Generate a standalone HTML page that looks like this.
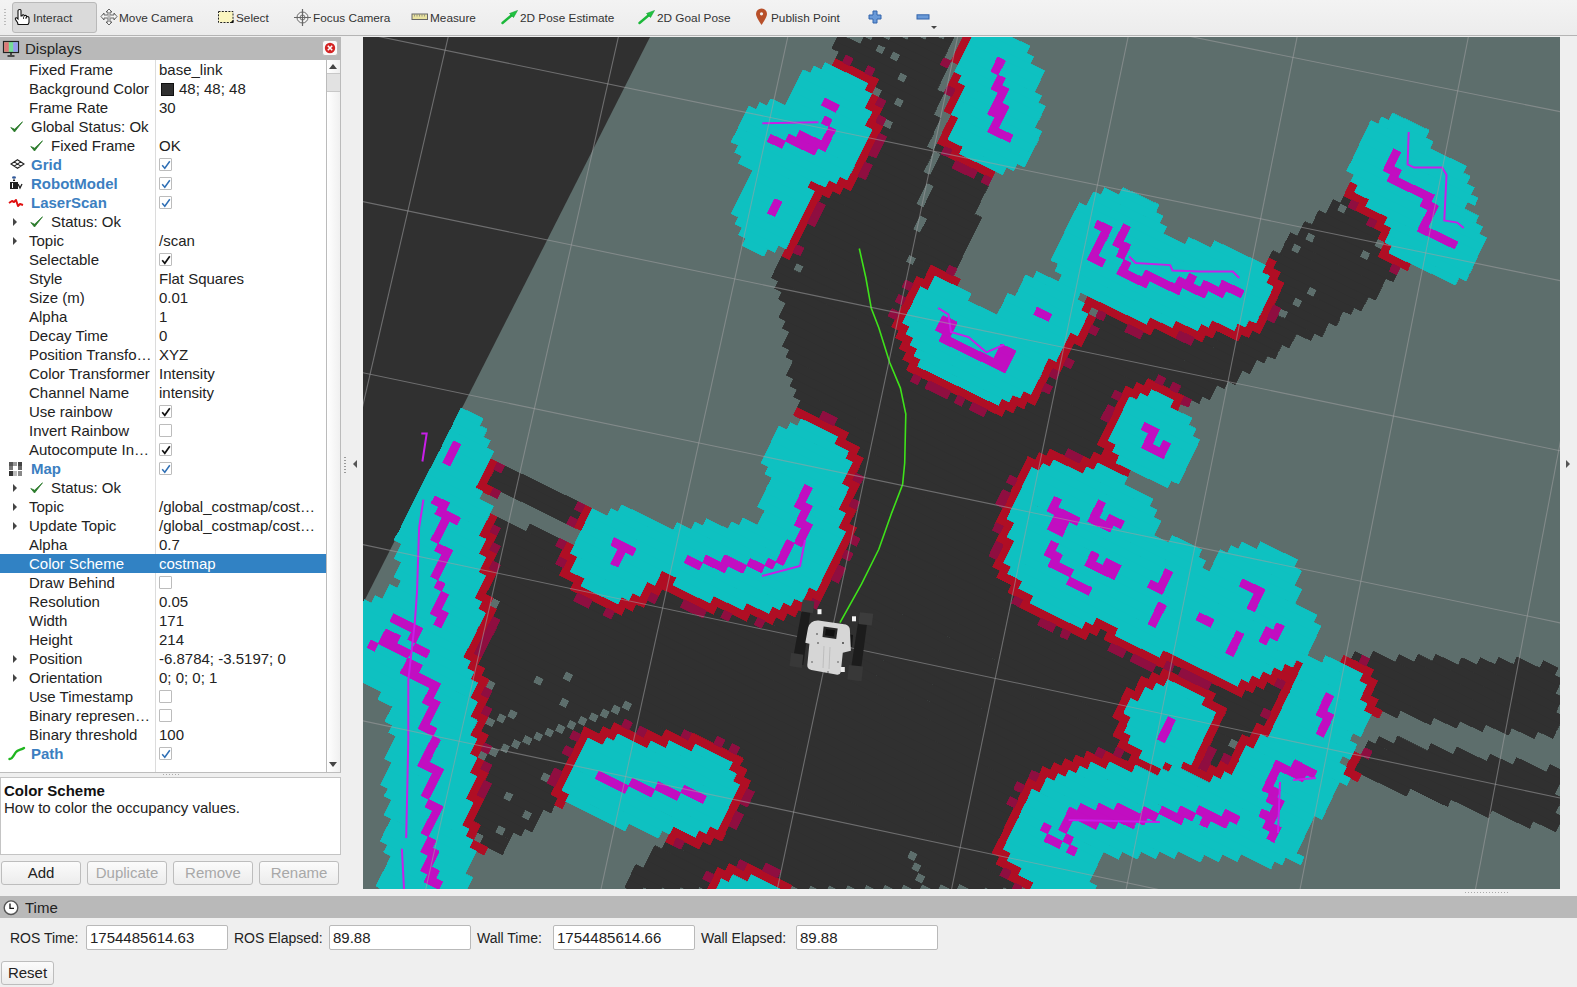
<!DOCTYPE html>
<html><head><meta charset="utf-8">
<style>
*{box-sizing:border-box}
html,body{margin:0;padding:0;width:1577px;height:987px;overflow:hidden;background:#efefef;font-family:"Liberation Sans",sans-serif;color:#222}
.a{position:absolute;white-space:nowrap}
#tb{position:absolute;left:0;top:0;width:1577px;height:36px;background:linear-gradient(#f3f3f3,#ececec);border-bottom:1px solid #b4b4b4}
.tt{position:absolute;top:10px;font-size:11.8px;color:#333;white-space:nowrap;line-height:16px}
#tree{position:absolute;left:0;top:60px;width:341px;height:713px;background:#fff;border-bottom:1px solid #bdbdbd;overflow:hidden}
.r{position:absolute;left:0;width:326px;height:19px;font-size:15px;line-height:19px}
.l{position:absolute;left:29px;top:0}
.v{position:absolute;left:159px;top:0}
.b{font-weight:bold;color:#3c7fc1}
.cb{position:absolute;left:159px;top:3px;width:13px;height:13px;border:1px solid #bcbcbc;background:#fff;border-radius:1px}
.ar{position:absolute;left:13px;top:6px;width:0;height:0;border-left:4px solid #444;border-top:4px solid transparent;border-bottom:4px solid transparent}
.btn{position:absolute;height:24px;border:1px solid #bdbdbd;border-radius:3px;background:linear-gradient(#fbfbfb,#ececec);font-size:15px;text-align:center;line-height:22px}
.fld{position:absolute;top:925px;height:25px;border:1px solid #b9b9b9;border-radius:2px;background:#fff;font-size:15px;line-height:23px;padding-left:3px}
.tl{position:absolute;top:929px;font-size:14px;line-height:19px}
</style></head><body>
<!-- toolbar -->
<div id="tb">
 <div class="a" style="left:4px;top:9px;width:2px;height:18px;background:repeating-linear-gradient(#bbb 0 1px,transparent 1px 3px)"></div>
 <div class="a" style="left:12px;top:2px;width:85px;height:31px;border:1px solid #b9b9b9;border-radius:3px;background:#dadada"></div>
 <!--icons-->
<svg class="a" style="left:14px;top:8px" width="18" height="18" viewBox="0 0 18 18"><path d="M5.5 1.5 Q6.8 1.2 7 2.5 L7 8 L8 8 Q8.3 6.5 9.5 6.8 Q10.3 7 10.3 8.3 Q10.8 7 12 7.5 Q12.8 8 12.6 9 Q13.5 8.2 14.4 8.8 Q15.2 9.3 15 11 L15 14.5 L14 16.5 L4 16.5 L3.5 14.5 L1.5 11.5 Q1 9.5 2.5 9.7 L4 11 L4 2.6 Q4.2 1.5 5.5 1.5 Z" fill="#fff" stroke="#111" stroke-width="1.1"/><path d="M9.5 8.5 V11 M12 9 V11" stroke="#111" stroke-width="0.8"/></svg>
<svg class="a" style="left:100px;top:8px" width="18" height="18" viewBox="0 0 18 18"><path d="M9 1 L12 4 L10 4 L10 7 L14 7 L14 5 L17 8.5 L14 12 L14 10 L10 10 L10 14 L12 14 L9 17 L6 14 L8 14 L8 10 L4 10 L4 12 L1 8.5 L4 5 L4 7 L8 7 L8 4 L6 4 Z" fill="#f4f4f4" stroke="#555" stroke-width="0.9"/><rect x="7.5" y="6.5" width="3" height="4" fill="#bbb"/></svg>
<svg class="a" style="left:217px;top:10px" width="18" height="14" viewBox="0 0 18 14"><rect x="1.5" y="1.5" width="14.5" height="11" fill="#fbf6c0" stroke="#222" stroke-width="1" stroke-dasharray="2 1.3"/><path d="M13 13 L16.5 13 L16.5 9.5 Z" fill="#111"/></svg>
<svg class="a" style="left:293px;top:8px" width="19" height="19" viewBox="0 0 19 19"><circle cx="9.5" cy="9.5" r="5.5" fill="#f2f2f2" stroke="#666" stroke-width="1"/><circle cx="9.5" cy="9.5" r="2.5" fill="none" stroke="#666" stroke-width="0.9"/><path d="M9.5 1 V18 M1 9.5 H18" stroke="#666" stroke-width="1.2"/></svg>
<svg class="a" style="left:411px;top:13px" width="18" height="8" viewBox="0 0 18 8"><rect x="1" y="1" width="15.5" height="5.5" fill="#e9e3a0" stroke="#666" stroke-width="1"/><path d="M3.5 1.5 V3.5 M6 1.5 V3.5 M8.5 1.5 V3.5 M11 1.5 V3.5 M13.5 1.5 V3.5" stroke="#777" stroke-width="0.7"/></svg>
<svg class="a" style="left:501px;top:9px" width="18" height="16" viewBox="0 0 18 16"><path d="M1.5 14 L11 6" stroke="#1cb83a" stroke-width="2.4" stroke-linecap="round"/><path d="M16.5 1.5 L8.5 4.5 L12.5 8.5 Z" fill="#1fc43f" stroke="#18a034" stroke-width="0.6"/></svg>
<svg class="a" style="left:638px;top:9px" width="18" height="16" viewBox="0 0 18 16"><path d="M1.5 14 L11 6" stroke="#1cb83a" stroke-width="2.4" stroke-linecap="round"/><path d="M16.5 1.5 L8.5 4.5 L12.5 8.5 Z" fill="#1fc43f" stroke="#18a034" stroke-width="0.6"/></svg>
<svg class="a" style="left:755px;top:8px" width="13" height="18" viewBox="0 0 13 18"><path d="M6.5 17 Q1 9 1 6 A5.5 5.5 0 0 1 12 6 Q12 9 6.5 17 Z" fill="#b8502a"/><circle cx="6.5" cy="5.8" r="1.6" fill="#f1f1f1"/></svg>
<svg class="a" style="left:868px;top:10px" width="14" height="14" viewBox="0 0 14 14"><path d="M5 1 H9 V5 H13 V9 H9 V13 H5 V9 H1 V5 H5 Z" fill="#6a9ad8" stroke="#3264ac" stroke-width="1"/></svg>
<svg class="a" style="left:916px;top:14px" width="14" height="6" viewBox="0 0 14 6"><rect x="1" y="0.8" width="12" height="4.2" fill="#6a9ad8" stroke="#3264ac" stroke-width="1"/></svg>
<div class="a" style="left:931px;top:26px;width:0;height:0;border-top:3px solid #444;border-left:3px solid transparent;border-right:3px solid transparent"></div>
<!--/icons-->
 <div class="tt" style="left:33px">Interact</div>
 <div class="tt" style="left:119px">Move Camera</div>
 <div class="tt" style="left:236px">Select</div>
 <div class="tt" style="left:313px">Focus Camera</div>
 <div class="tt" style="left:430px">Measure</div>
 <div class="tt" style="left:520px">2D Pose Estimate</div>
 <div class="tt" style="left:657px">2D Goal Pose</div>
 <div class="tt" style="left:771px">Publish Point</div>
</div>
<!-- displays header -->
<div class="a" style="left:0;top:37px;width:341px;height:23px;background:#b9b9b9"></div>
<div class="a" style="left:25px;top:39px;font-size:15px;line-height:19px">Displays</div>
<div id="tree"><div class="a" style="left:155px;top:0;width:1px;height:713px;background:#dcdcdc"></div><div class="r" style="top:0px;"><span class="l" style="left:29px;">Fixed Frame</span><span class="v" style="">base_link</span></div><div class="r" style="top:19px;"><span class="l" style="left:29px;">Background Color</span><div class="a" style="left:161px;top:4px;width:13px;height:13px;background:#303030;border:1px solid #111"></div><span class="v" style="left:179px">48; 48; 48</span></div><div class="r" style="top:38px;"><span class="l" style="left:29px;">Frame Rate</span><span class="v" style="">30</span></div><div class="r" style="top:57px;"><svg class="a" style="left:10px;top:4px" width="13" height="12" viewBox="0 0 13 12"><path d="M0.8 6.5 L4.5 11 L12.5 0.8 L4.6 8.2 Z" fill="#2a7a2a" stroke="#2a7a2a" stroke-width="0.8" stroke-linejoin="round"/></svg><span class="l" style="left:31px;">Global Status: Ok</span></div><div class="r" style="top:76px;"><svg class="a" style="left:30px;top:4px" width="13" height="12" viewBox="0 0 13 12"><path d="M0.8 6.5 L4.5 11 L12.5 0.8 L4.6 8.2 Z" fill="#2a7a2a" stroke="#2a7a2a" stroke-width="0.8" stroke-linejoin="round"/></svg><span class="l" style="left:51px;">Fixed Frame</span><span class="v" style="">OK</span></div><div class="r" style="top:95px;"><svg class="a" style="left:10px;top:4px" width="15" height="10" viewBox="0 0 15 10"><path d="M7.5 0.7 L14 5 L7.5 9.3 L1 5 Z M4.2 2.9 L10.8 7.1 M10.8 2.9 L4.2 7.1" fill="none" stroke="#222" stroke-width="1.1"/></svg><span class="l b" style="left:31px;">Grid</span><div class="cb"></div><svg class="a" style="left:161px;top:5px" width="10" height="10" viewBox="0 0 10 10"><path d="M1.2 5.2 L3.8 8.3 L8.8 1.2" fill="none" stroke="#2f6fb5" stroke-width="1.5"/></svg></div><div class="r" style="top:114px;"><svg class="a" style="left:9px;top:1px" width="16" height="18" viewBox="0 0 16 18"><ellipse cx="5" cy="2.5" rx="2" ry="1.3" fill="#335a9a"/><rect x="4" y="4.5" width="2" height="1.5" fill="#222"/><rect x="1" y="7" width="8" height="7" fill="#222"/><rect x="3" y="8" width="1" height="5" fill="#fff"/><path d="M9 9 L11 13 L13 9" fill="none" stroke="#222" stroke-width="1.3"/></svg><span class="l b" style="left:31px;">RobotModel</span><div class="cb"></div><svg class="a" style="left:161px;top:5px" width="10" height="10" viewBox="0 0 10 10"><path d="M1.2 5.2 L3.8 8.3 L8.8 1.2" fill="none" stroke="#2f6fb5" stroke-width="1.5"/></svg></div><div class="r" style="top:133px;"><svg class="a" style="left:8px;top:5px" width="18" height="10" viewBox="0 0 18 10"><path d="M1 5 L4 3 L6 4 L8 2 L10 8 L12 6 L15 7" fill="none" stroke="#e01010" stroke-width="2" stroke-linejoin="round"/></svg><span class="l b" style="left:31px;">LaserScan</span><div class="cb"></div><svg class="a" style="left:161px;top:5px" width="10" height="10" viewBox="0 0 10 10"><path d="M1.2 5.2 L3.8 8.3 L8.8 1.2" fill="none" stroke="#2f6fb5" stroke-width="1.5"/></svg></div><div class="r" style="top:152px;"><div class="ar"></div><svg class="a" style="left:30px;top:4px" width="13" height="12" viewBox="0 0 13 12"><path d="M0.8 6.5 L4.5 11 L12.5 0.8 L4.6 8.2 Z" fill="#2a7a2a" stroke="#2a7a2a" stroke-width="0.8" stroke-linejoin="round"/></svg><span class="l" style="left:51px;">Status: Ok</span></div><div class="r" style="top:171px;"><div class="ar"></div><span class="l" style="left:29px;">Topic</span><span class="v" style="">/scan</span></div><div class="r" style="top:190px;"><span class="l" style="left:29px;">Selectable</span><div class="cb"></div><svg class="a" style="left:161px;top:5px" width="10" height="10" viewBox="0 0 10 10"><path d="M1.2 5.2 L3.8 8.3 L8.8 1.2" fill="none" stroke="#111" stroke-width="1.7"/></svg></div><div class="r" style="top:209px;"><span class="l" style="left:29px;">Style</span><span class="v" style="">Flat Squares</span></div><div class="r" style="top:228px;"><span class="l" style="left:29px;">Size (m)</span><span class="v" style="">0.01</span></div><div class="r" style="top:247px;"><span class="l" style="left:29px;">Alpha</span><span class="v" style="">1</span></div><div class="r" style="top:266px;"><span class="l" style="left:29px;">Decay Time</span><span class="v" style="">0</span></div><div class="r" style="top:285px;"><span class="l" style="left:29px;">Position Transfo…</span><span class="v" style="">XYZ</span></div><div class="r" style="top:304px;"><span class="l" style="left:29px;">Color Transformer</span><span class="v" style="">Intensity</span></div><div class="r" style="top:323px;"><span class="l" style="left:29px;">Channel Name</span><span class="v" style="">intensity</span></div><div class="r" style="top:342px;"><span class="l" style="left:29px;">Use rainbow</span><div class="cb"></div><svg class="a" style="left:161px;top:5px" width="10" height="10" viewBox="0 0 10 10"><path d="M1.2 5.2 L3.8 8.3 L8.8 1.2" fill="none" stroke="#111" stroke-width="1.7"/></svg></div><div class="r" style="top:361px;"><span class="l" style="left:29px;">Invert Rainbow</span><div class="cb"></div></div><div class="r" style="top:380px;"><span class="l" style="left:29px;">Autocompute In…</span><div class="cb"></div><svg class="a" style="left:161px;top:5px" width="10" height="10" viewBox="0 0 10 10"><path d="M1.2 5.2 L3.8 8.3 L8.8 1.2" fill="none" stroke="#111" stroke-width="1.7"/></svg></div><div class="r" style="top:399px;"><svg class="a" style="left:8px;top:2px" width="16" height="16" viewBox="0 0 16 16"><rect x="1" y="1" width="4" height="4" fill="#555"/><rect x="5" y="1" width="4" height="4" fill="#999"/><rect x="10" y="1" width="4" height="4" fill="#444"/><rect x="1" y="5" width="4" height="4" fill="#777"/><rect x="10" y="5" width="4" height="4" fill="#666"/><rect x="1" y="10" width="4" height="5" fill="#333"/><rect x="5" y="10" width="4" height="5" fill="#bbb"/><rect x="10" y="10" width="4" height="5" fill="#888"/></svg><span class="l b" style="left:31px;">Map</span><div class="cb"></div><svg class="a" style="left:161px;top:5px" width="10" height="10" viewBox="0 0 10 10"><path d="M1.2 5.2 L3.8 8.3 L8.8 1.2" fill="none" stroke="#2f6fb5" stroke-width="1.5"/></svg></div><div class="r" style="top:418px;"><div class="ar"></div><svg class="a" style="left:30px;top:4px" width="13" height="12" viewBox="0 0 13 12"><path d="M0.8 6.5 L4.5 11 L12.5 0.8 L4.6 8.2 Z" fill="#2a7a2a" stroke="#2a7a2a" stroke-width="0.8" stroke-linejoin="round"/></svg><span class="l" style="left:51px;">Status: Ok</span></div><div class="r" style="top:437px;"><div class="ar"></div><span class="l" style="left:29px;">Topic</span><span class="v" style="">/global_costmap/cost…</span></div><div class="r" style="top:456px;"><div class="ar"></div><span class="l" style="left:29px;">Update Topic</span><span class="v" style="">/global_costmap/cost…</span></div><div class="r" style="top:475px;"><span class="l" style="left:29px;">Alpha</span><span class="v" style="">0.7</span></div><div class="r" style="top:494px;background:#3182c4;width:326px;"><span class="l" style="left:29px;color:#fff;">Color Scheme</span><span class="v" style="color:#fff;">costmap</span></div><div class="r" style="top:513px;"><span class="l" style="left:29px;">Draw Behind</span><div class="cb"></div></div><div class="r" style="top:532px;"><span class="l" style="left:29px;">Resolution</span><span class="v" style="">0.05</span></div><div class="r" style="top:551px;"><span class="l" style="left:29px;">Width</span><span class="v" style="">171</span></div><div class="r" style="top:570px;"><span class="l" style="left:29px;">Height</span><span class="v" style="">214</span></div><div class="r" style="top:589px;"><div class="ar"></div><span class="l" style="left:29px;">Position</span><span class="v" style="">-6.8784; -3.5197; 0</span></div><div class="r" style="top:608px;"><div class="ar"></div><span class="l" style="left:29px;">Orientation</span><span class="v" style="">0; 0; 0; 1</span></div><div class="r" style="top:627px;"><span class="l" style="left:29px;">Use Timestamp</span><div class="cb"></div></div><div class="r" style="top:646px;"><span class="l" style="left:29px;">Binary represen…</span><div class="cb"></div></div><div class="r" style="top:665px;"><span class="l" style="left:29px;">Binary threshold</span><span class="v" style="">100</span></div><div class="r" style="top:684px;"><svg class="a" style="left:8px;top:2px" width="18" height="15" viewBox="0 0 18 15"><path d="M1.5 13 C5 13 6 8 8 6 C10 3.5 13 4 16 2" fill="none" stroke="#1fb51f" stroke-width="2.4" stroke-linecap="round"/></svg><span class="l b" style="left:31px;">Path</span><div class="cb"></div><svg class="a" style="left:161px;top:5px" width="10" height="10" viewBox="0 0 10 10"><path d="M1.2 5.2 L3.8 8.3 L8.8 1.2" fill="none" stroke="#2f6fb5" stroke-width="1.5"/></svg></div><div class="a" style="left:326px;top:0;width:15px;height:713px;background:linear-gradient(90deg,#fff,#f0f0f0);border-left:1px solid #bbb;border-right:1px solid #bbb"></div><div class="a" style="left:329px;top:4px;width:0;height:0;border-bottom:5px solid #444;border-left:4.5px solid transparent;border-right:4.5px solid transparent"></div><div class="a" style="left:327px;top:13px;width:13px;height:19px;background:#e2e2e2;border-top:1px solid #c8c8c8;border-bottom:1px solid #c8c8c8"></div><div class="a" style="left:329px;top:702px;width:0;height:0;border-top:5px solid #444;border-left:4.5px solid transparent;border-right:4.5px solid transparent"></div></div><!--/tree-->
<!-- description -->
<div class="a" style="left:0;top:777px;width:341px;height:78px;background:#fff;border:1px solid #c4c4c4"></div>
<div class="a" style="left:4px;top:781px;font-size:15px;font-weight:bold;line-height:19px;color:#111">Color Scheme</div>
<div class="a" style="left:4px;top:798px;font-size:15px;line-height:19px">How to color the occupancy values.</div>
<div class="btn" style="left:1px;top:861px;width:80px">Add</div>
<div class="btn" style="left:87px;top:861px;width:80px;color:#a8a8a8">Duplicate</div>
<div class="btn" style="left:173px;top:861px;width:80px;color:#a8a8a8">Remove</div>
<div class="btn" style="left:259px;top:861px;width:80px;color:#a8a8a8">Rename</div>
<!-- time -->
<div class="a" style="left:0;top:896px;width:1577px;height:22px;background:#b9b9b9"></div>
<div class="a" style="left:25px;top:898px;font-size:15px;line-height:19px">Time</div>
<div class="tl" style="left:10px">ROS Time:</div>
<div class="fld" style="left:86px;width:142px">1754485614.63</div>
<div class="tl" style="left:234px">ROS Elapsed:</div>
<div class="fld" style="left:329px;width:142px">89.88</div>
<div class="tl" style="left:477px">Wall Time:</div>
<div class="fld" style="left:553px;width:142px">1754485614.66</div>
<div class="tl" style="left:701px">Wall Elapsed:</div>
<div class="fld" style="left:796px;width:142px">89.88</div>
<div class="btn" style="left:1px;top:961px;width:53px;height:24px">Reset</div>
<!--chrome2-->
<svg class="a" style="left:2px;top:40px" width="18" height="18" viewBox="0 0 18 18"><rect x="1.5" y="1.5" width="15" height="11" fill="#7d9" stroke="#222" stroke-width="1.2"/><rect x="2.2" y="2.2" width="4.6" height="9.6" fill="#d77"/><rect x="11.2" y="2.2" width="4.6" height="9.6" fill="#99e"/><path d="M9 12.5 V15 M5.5 16 H12.5" stroke="#222" stroke-width="1.5"/></svg>
<div class="a" style="left:322px;top:40px;width:16px;height:16px;border:1px solid #bbb;border-radius:3px;background:#fafafa"></div>
<svg class="a" style="left:324px;top:42px" width="12" height="12" viewBox="0 0 12 12"><circle cx="6" cy="6" r="5.2" fill="#d42424"/><path d="M3.8 3.8 L8.2 8.2 M8.2 3.8 L3.8 8.2" stroke="#fff" stroke-width="1.6"/></svg>
<svg class="a" style="left:2px;top:899px" width="18" height="18" viewBox="0 0 18 18"><circle cx="9" cy="8.7" r="6.8" fill="#fff" stroke="#555" stroke-width="1.4"/><path d="M8 4.5 V9.3 H12" fill="none" stroke="#111" stroke-width="1.3"/></svg>
<div class="a" style="left:344px;top:457px;width:2px;height:17px;background:repeating-linear-gradient(#999 0 1px,transparent 1px 3px)"></div>
<div class="a" style="left:353px;top:460px;width:0;height:0;border-right:4px solid #555;border-top:4px solid transparent;border-bottom:4px solid transparent"></div>
<div class="a" style="left:1566px;top:460px;width:0;height:0;border-left:4px solid #555;border-top:4px solid transparent;border-bottom:4px solid transparent"></div>
<div class="a" style="left:163px;top:774px;width:18px;height:1px;background:repeating-linear-gradient(90deg,#aaa 0 1px,transparent 1px 3px)"></div>
<div class="a" style="left:1465px;top:892px;width:45px;height:1px;background:repeating-linear-gradient(90deg,#aaa 0 1px,transparent 1px 3px)"></div>
<!--/chrome2-->
<!-- viewport -->
<svg id="vp" class="a" style="left:363px;top:37px" width="1197" height="853" viewBox="363 37 1197 853"><defs><clipPath id="vpc"><rect x="363" y="37" width="1197" height="852"/></clipPath><clipPath id="dk"><polygon points="831.0,37.0 975.0,37.0 990.0,90.0 1000.0,165.0 993.9,177.6 991.4,180.1 976.2,215.6 981.3,218.1 956.0,271.3 958.5,286.5 975.0,330.0 1060.0,330.0 1072.0,298.0 1150.0,300.0 1250.0,290.0 1266.0,264.0 1270.6,254.4 1280.9,252.7 1287.8,237.2 1301.6,233.7 1303.3,225.1 1312.0,226.9 1318.8,214.8 1329.2,214.8 1334.4,204.5 1346.4,201.0 1349.9,185.5 1370.0,190.0 1410.0,255.0 1409.8,269.4 1400.0,271.7 1394.7,282.0 1384.3,282.0 1379.2,294.1 1365.4,297.5 1360.2,307.8 1349.9,307.8 1343.0,319.9 1330.9,321.6 1322.3,335.4 1310.2,335.4 1295.4,338.5 1280.3,351.4 1263.0,360.0 1250.1,366.6 1235.0,379.5 1226.3,383.8 1213.4,392.5 1200.4,398.9 1190.0,402.0 1150.0,420.0 1130.0,470.0 1070.0,520.0 1060.0,590.0 1100.0,612.0 1160.0,645.0 1240.0,680.0 1300.0,660.0 1330.0,700.0 1300.0,800.0 1250.0,800.0 1150.0,820.0 1085.0,845.0 1096.8,855.1 1092.5,889.0 622.0,889.0 630.6,865.9 643.6,865.9 663.0,840.0 685.0,825.0 600.0,790.0 574.5,805.5 550.8,807.7 531.4,827.1 514.1,833.6 501.1,853.0 488.2,846.5 479.6,857.3 455.0,850.0 455.0,540.0 486.0,510.5 527.0,529.9 529.2,525.6 573.4,542.9 600.0,560.0 700.0,560.0 800.0,520.0 815.0,432.0 801.1,418.4 794.7,414.0 801.1,403.2 790.3,386.0 792.5,362.2 783.9,347.1 790.3,334.2 780.6,316.9 781.7,293.2 773.1,278.0 775.2,263.0 790.0,240.0 800.0,150.0 830.0,75.0 835.7,56.4"/><polygon points="488.0,455.0 501.1,463.0 585.3,505.1 600.0,515.0 578.8,529.9 511.9,497.5 507.6,495.4 480.6,493.2 470.0,480.0"/><polygon points="1345.0,655.0 1373.0,656.5 1559.7,663.8 1559.7,734.3 1543.2,736.7 1518.9,734.3 1494.6,727.0 1467.8,727.0 1436.2,722.1 1414.3,717.3 1373.0,712.4 1350.0,712.0"/><polygon points="1345.0,760.0 1377.8,736.7 1411.9,744.0 1438.6,747.7 1472.7,753.8 1501.8,759.8 1531.0,763.5 1559.7,772.0 1559.7,828.0 1555.3,830.4 1514.0,819.4 1472.7,808.5 1432.5,798.7 1391.2,787.8 1353.5,775.6 1340.0,775.0"/></clipPath></defs><g clip-path="url(#vpc)"><rect x="363" y="37" width="1197" height="853" fill="#303030"/><polygon points="650.0,37.0 1560.0,37.0 1560.0,889.0 363.0,889.0 363.0,603.5" fill="#5d6e6c"/><path d="M1343.8 196.0L1351.2 199.5L1347.7 206.7L1340.4 203.2ZM1333.0 199.7L1340.4 203.2L1336.9 210.4L1329.6 206.9ZM1347.7 206.7L1369.7 217.3L1366.3 224.5L1344.3 214.0ZM1329.6 206.9L1381.0 231.5L1377.5 238.8L1326.1 214.2ZM947.0 32.8L954.2 36.2L950.7 43.4L943.5 39.9ZM1318.8 210.6L1377.5 238.8L1374.1 246.0L1315.3 217.9ZM929.0 33.0L950.7 43.4L947.2 50.5L925.4 40.1ZM1315.3 217.9L1381.4 249.5L1378.0 256.7L1311.9 225.1ZM911.0 33.2L947.2 50.5L943.6 57.6L907.4 40.3ZM1304.5 221.6L1363.3 249.7L1359.8 256.9L1301.1 228.8ZM1370.6 253.2L1392.7 263.8L1389.3 271.0L1367.2 260.5ZM892.9 33.3L943.6 57.6L940.1 64.8L889.4 40.5ZM1301.1 228.8L1308.4 232.3L1304.9 239.5L1297.6 236.0ZM1315.7 235.8L1396.6 274.6L1393.2 281.8L1312.3 243.1ZM874.9 33.5L947.3 68.2L943.8 75.4L871.4 40.7ZM1290.2 232.5L1385.8 278.3L1382.4 285.5L1286.8 239.7ZM864.1 37.2L878.6 44.1L875.0 51.3L860.6 44.3ZM885.8 47.6L893.1 51.1L889.5 58.2L882.3 54.7ZM900.3 54.5L943.8 75.4L940.3 82.5L896.8 61.7ZM1286.8 239.7L1294.1 243.3L1290.6 250.5L1283.3 247.0ZM1301.5 246.8L1382.4 285.5L1378.9 292.8L1298.0 254.0ZM838.9 33.9L940.3 82.5L936.7 89.7L835.3 41.1ZM1283.3 247.0L1378.9 292.8L1375.4 300.1L1279.8 254.2ZM835.3 41.1L900.5 72.3L896.9 79.4L831.7 48.2ZM907.7 75.8L944.0 93.2L940.4 100.3L904.2 82.9ZM1272.5 250.7L1368.1 296.5L1364.6 303.8L1269.0 257.9ZM839.0 51.7L846.2 55.1L842.6 62.3L835.4 58.8ZM853.4 58.6L867.9 65.5L864.4 72.7L849.9 65.7ZM875.2 69.0L940.4 100.3L936.9 107.5L871.6 76.2ZM1276.3 261.4L1364.6 303.8L1361.2 311.1L1272.9 268.7ZM878.9 79.6L936.9 107.5L933.3 114.7L875.3 86.8ZM1280.2 272.2L1309.6 286.3L1306.1 293.6L1276.7 279.5ZM1317.0 289.9L1353.8 307.5L1350.3 314.8L1313.5 297.1ZM882.5 90.3L897.1 97.2L893.5 104.4L879.0 97.4ZM904.3 100.7L940.6 118.1L937.1 125.3L900.8 107.9ZM1284.1 283.0L1343.0 311.3L1339.5 318.5L1280.6 290.3ZM886.2 100.9L937.1 125.3L933.5 132.5L882.7 108.1ZM1280.6 290.3L1295.3 297.3L1291.8 304.6L1277.1 297.5ZM1302.7 300.8L1339.5 318.5L1336.0 325.8L1299.2 308.1ZM882.7 108.1L933.5 132.5L930.0 139.7L879.1 115.2ZM1277.1 297.5L1328.7 322.3L1325.2 329.5L1273.6 304.8ZM893.6 122.2L930.0 139.7L926.4 146.8L890.1 129.4ZM937.2 143.2L944.5 146.6L941.0 153.8L933.7 150.3ZM1288.4 311.8L1325.2 329.5L1321.7 336.8L1284.9 319.1ZM882.8 125.9L933.7 150.3L930.1 157.5L879.3 133.1ZM941.0 153.8L955.5 160.8L952.0 168.0L937.4 161.0ZM977.3 171.3L984.6 174.8L981.1 182.0L973.8 178.5ZM1277.5 315.6L1314.3 333.3L1310.9 340.6L1274.0 322.9ZM886.5 136.6L930.1 157.5L926.6 164.7L883.0 143.7ZM937.4 161.0L988.4 185.5L984.8 192.7L933.8 168.2ZM1266.7 319.3L1296.1 333.5L1292.6 340.8L1263.2 326.6ZM883.0 143.7L926.6 164.7L923.0 171.9L879.4 150.9ZM933.8 168.2L984.8 192.7L981.3 199.9L930.3 175.4ZM1263.2 326.6L1292.6 340.8L1289.2 348.0L1259.7 333.9ZM879.4 150.9L981.3 199.9L977.7 207.2L875.8 158.1ZM1252.3 330.3L1281.8 344.5L1278.3 351.8L1248.8 337.6ZM868.6 154.6L926.7 182.6L923.2 189.8L865.0 161.8ZM934.0 186.1L977.7 207.2L974.2 214.4L930.5 193.3ZM1241.5 334.1L1278.3 351.8L1274.8 359.1L1238.0 341.3ZM872.2 165.3L923.2 189.8L919.6 197.0L868.7 172.5ZM930.5 193.3L981.5 217.9L977.9 225.1L926.9 200.5ZM1215.9 330.7L1267.4 355.5L1263.9 362.8L1212.4 338.0ZM868.7 172.5L919.6 197.0L916.0 204.2L865.1 179.7ZM926.9 200.5L977.9 225.1L974.4 232.3L923.3 207.7ZM1205.0 334.5L1256.6 359.3L1253.1 366.6L1201.5 341.7ZM857.8 176.2L974.4 232.3L970.8 239.6L854.3 183.4ZM1194.2 338.2L1253.1 366.6L1249.6 373.9L1190.7 345.5ZM854.3 183.4L919.8 215.0L916.2 222.2L850.7 190.6ZM927.1 218.5L970.8 239.6L967.3 246.8L923.5 225.7ZM1153.9 327.8L1242.2 370.3L1238.7 377.6L1150.4 335.1ZM843.4 187.1L916.2 222.2L912.6 229.4L839.8 194.3ZM923.5 225.7L967.3 246.8L963.7 254.0L919.9 232.9ZM1106.3 313.8L1128.4 324.4L1124.8 331.7L1102.8 321.1ZM1143.0 331.5L1238.7 377.6L1235.2 384.9L1139.5 338.8ZM832.6 190.8L963.7 254.0L960.2 261.3L829.0 198.0ZM1095.5 317.6L1227.8 381.4L1224.3 388.7L1091.9 324.8ZM821.7 194.5L960.2 261.3L956.6 268.5L818.1 201.7ZM1099.3 328.4L1217.0 385.1L1213.4 392.4L1095.7 335.6ZM825.4 205.2L949.3 265.0L945.7 272.2L821.8 212.4ZM1088.4 332.1L1213.4 392.4L1209.9 399.7L1084.9 339.4ZM821.8 212.4L909.2 254.6L905.6 261.9L818.2 219.6ZM916.5 258.1L931.1 265.2L927.5 272.4L912.9 265.4ZM1084.9 339.4L1158.4 374.9L1154.8 382.2L1081.3 346.7ZM1165.7 378.4L1173.1 382.0L1169.6 389.3L1162.2 385.7ZM1180.5 385.5L1202.6 396.2L1199.0 403.5L1176.9 392.8ZM818.2 219.6L927.5 272.4L924.0 279.7L814.6 226.9ZM1074.0 343.1L1147.5 378.6L1144.0 385.9L1070.4 350.4ZM807.3 223.4L916.7 276.2L913.1 283.4L803.7 230.6ZM1070.4 350.4L1136.6 382.4L1133.1 389.7L1066.9 357.7ZM803.7 230.6L905.8 279.9L902.2 287.1L800.1 237.8ZM1074.2 361.3L1125.7 386.1L1122.2 393.4L1070.7 368.6ZM800.1 237.8L909.5 290.7L905.9 297.9L796.5 245.0ZM1063.4 365.0L1114.8 389.9L1111.3 397.2L1059.8 372.3ZM803.8 248.6L898.6 294.4L895.1 301.7L800.2 255.8ZM1059.8 372.3L1118.6 400.7L1115.1 408.1L1056.3 379.6ZM792.9 252.3L902.4 305.2L898.8 312.5L789.3 259.5ZM1048.9 376.1L1107.7 404.5L1104.2 411.8L1045.4 383.4ZM782.1 256.0L796.6 263.0L793.0 270.3L778.5 263.2ZM803.9 266.6L891.5 308.9L887.9 316.2L800.3 273.8ZM1052.7 386.9L1104.2 411.8L1100.7 419.1L1049.2 394.2ZM778.5 263.2L895.2 319.7L891.6 327.0L774.8 270.5ZM1041.8 390.7L1108.0 422.7L1104.5 430.0L1038.3 398.0ZM774.8 270.5L898.9 330.5L895.3 337.8L771.2 277.7ZM1038.3 398.0L1104.5 430.0L1100.9 437.4L1034.7 405.3ZM778.5 281.3L902.7 341.4L899.1 348.7L774.9 288.5ZM1027.3 401.7L1100.9 437.4L1097.4 444.7L1023.8 409.0ZM782.2 292.0L906.4 352.2L902.8 359.5L778.6 299.3ZM1016.4 405.5L1104.8 448.3L1101.2 455.6L1012.9 412.8ZM1543.0 660.5L1558.0 667.8L1554.5 675.2L1539.5 668.0ZM785.9 302.8L910.1 363.0L906.6 370.3L782.3 310.1ZM1005.5 409.2L1093.8 452.0L1090.3 459.4L1001.9 416.6ZM1517.1 657.1L1562.0 678.9L1558.6 686.3L1513.6 664.5ZM782.3 310.1L913.9 373.9L910.3 381.2L778.7 317.4ZM921.2 377.4L928.5 381.0L925.0 388.3L917.6 384.7ZM950.5 391.7L957.9 395.2L954.3 402.5L947.0 399.0ZM965.2 398.8L972.6 402.3L969.0 409.6L961.6 406.1ZM987.3 409.4L1068.2 448.7L1064.6 456.0L983.7 416.8ZM1498.7 657.3L1558.6 686.3L1555.1 693.8L1495.2 664.7ZM786.0 320.9L1049.9 448.9L1046.3 456.2L782.3 328.2ZM1480.2 657.5L1562.6 697.4L1559.1 704.9L1476.8 664.9ZM789.6 331.7L1039.0 452.6L1035.4 460.0L786.0 339.0ZM1461.8 657.7L1559.1 704.9L1555.7 712.4L1458.3 665.1ZM786.0 339.0L1028.0 456.4L1024.5 463.8L782.4 346.3ZM1435.9 654.3L1563.2 716.0L1559.7 723.5L1432.4 661.7ZM789.7 349.8L1024.5 463.8L1020.9 471.1L786.1 357.1ZM1417.5 654.5L1559.7 723.5L1556.2 731.0L1414.0 661.9ZM793.4 360.7L1020.9 471.1L1017.3 478.5L789.8 368.0ZM1399.1 654.7L1556.2 731.0L1552.8 738.5L1395.6 662.1ZM789.8 368.0L1010.0 474.9L1006.4 482.2L786.2 375.3ZM1373.2 651.3L1537.8 731.2L1534.3 738.7L1369.7 658.7ZM793.5 378.8L1013.8 485.8L1010.2 493.2L789.9 386.1ZM1354.8 651.5L1362.2 655.1L1358.7 662.5L1351.3 658.9ZM1369.7 658.7L1511.8 727.7L1508.3 735.2L1366.2 666.2ZM797.2 389.7L1002.8 489.6L999.2 497.0L793.6 397.0ZM1373.7 669.8L1485.8 724.3L1482.4 731.8L1370.1 677.2ZM800.9 400.6L822.9 411.2L819.2 418.6L797.3 407.9ZM837.5 418.4L999.2 497.0L995.6 504.3L833.9 425.7ZM1377.6 680.9L1459.9 720.9L1456.4 728.3L1374.1 688.3ZM1549.9 764.6L1564.9 771.9L1561.5 779.4L1546.4 772.1ZM848.6 432.8L1003.0 507.9L999.4 515.3L845.0 440.1ZM1374.1 688.3L1433.9 717.4L1430.4 724.9L1370.6 695.8ZM1516.4 757.5L1561.5 779.4L1558.0 786.9L1512.9 765.0ZM859.6 447.3L999.4 515.3L995.9 522.7L856.0 454.6ZM1378.1 699.4L1400.5 710.3L1397.0 717.8L1374.6 706.9ZM1490.4 754.1L1558.0 786.9L1554.5 794.5L1486.9 761.6ZM863.4 458.2L995.9 522.7L992.3 530.0L859.8 465.5ZM1456.9 747.0L1562.0 798.1L1558.6 805.6L1453.4 754.5ZM859.8 465.5L999.6 533.6L996.1 541.0L856.1 472.9ZM1430.9 743.5L1558.6 805.6L1555.1 813.2L1427.4 751.0ZM863.5 476.5L996.1 541.0L992.5 548.4L859.9 483.8ZM1397.5 736.4L1562.6 816.8L1559.1 824.4L1394.0 743.9ZM859.9 483.8L992.5 548.4L988.9 555.8L856.3 491.2ZM1267.0 682.1L1281.9 689.3L1278.4 696.8L1263.4 689.5ZM1379.0 736.6L1559.1 824.4L1555.7 831.9L1375.5 744.1ZM856.3 491.2L996.3 559.4L992.7 566.8L852.6 498.6ZM1256.0 685.9L1278.4 696.8L1274.8 704.3L1252.4 693.4ZM1368.0 740.5L1533.1 820.9L1529.6 828.4L1364.5 748.0ZM860.0 502.1L1000.1 570.4L996.5 577.8L856.4 509.5ZM1245.0 689.7L1274.8 704.3L1271.3 711.8L1241.5 697.2ZM1372.0 751.6L1492.0 810.1L1488.5 817.6L1368.5 759.1ZM856.4 509.5L1011.3 585.0L1007.7 592.4L852.8 516.9ZM1100.2 628.3L1107.6 632.0L1104.0 639.4L1096.6 635.8ZM1174.4 664.5L1181.9 668.2L1178.3 675.6L1170.9 672.0ZM1211.6 682.7L1263.8 708.1L1260.3 715.6L1208.1 690.2ZM1361.0 755.5L1450.9 799.3L1447.4 806.9L1357.5 763.0ZM852.8 516.9L1015.1 596.0L1011.5 603.5L849.1 524.3ZM1089.2 632.2L1111.4 643.0L1107.9 650.5L1085.6 639.6ZM1126.3 650.3L1133.7 653.9L1130.1 661.3L1122.7 657.7ZM1156.0 664.8L1163.4 668.4L1159.9 675.8L1152.4 672.2ZM1215.6 693.8L1267.8 719.2L1264.2 726.7L1212.0 701.3ZM1357.5 763.0L1409.9 788.6L1406.4 796.1L1353.9 770.5ZM856.5 527.8L1041.1 617.9L1037.5 625.3L852.9 535.2ZM1055.9 625.1L1063.3 628.7L1059.8 636.2L1052.3 632.6ZM1070.8 632.4L1152.4 672.2L1148.9 679.7L1067.2 639.8ZM1226.9 708.5L1256.7 723.1L1253.2 730.6L1223.4 716.0ZM860.2 538.8L1141.4 676.0L1137.9 683.5L856.6 546.2ZM1223.4 716.0L1253.2 730.6L1249.7 738.1L1219.8 723.5ZM849.3 542.6L1137.9 683.5L1134.3 691.0L845.6 550.0ZM1219.8 723.5L1242.2 734.4L1238.7 741.9L1216.3 731.0ZM853.0 553.6L1126.9 687.3L1123.3 694.8L849.4 561.0ZM1216.3 731.0L1231.2 738.3L1227.6 745.8L1212.7 738.5ZM842.0 557.4L1123.3 694.8L1119.7 702.3L838.4 564.8ZM1212.7 738.5L1235.1 749.4L1231.6 756.9L1209.2 746.0ZM845.7 568.4L1119.7 702.3L1116.2 709.7L842.1 575.8ZM1216.6 749.6L1224.1 753.3L1220.5 760.8L1213.1 757.1ZM842.1 575.8L1116.2 709.7L1112.6 717.2L838.5 583.2ZM1213.1 757.1L1220.5 760.8L1217.0 768.3L1209.5 764.6ZM831.1 579.6L1120.0 720.9L1116.4 728.3L827.5 587.0ZM827.5 587.0L1116.4 728.3L1112.9 735.8L823.8 594.4ZM823.8 594.4L1120.3 739.5L1116.7 747.0L820.2 601.9ZM820.2 601.9L1116.7 747.0L1113.2 754.5L816.6 609.3ZM1124.2 750.6L1131.6 754.3L1128.1 761.8L1120.6 758.1ZM809.2 605.7L1098.3 747.2L1094.7 754.7L805.5 613.1ZM504.7 465.8L577.8 501.5L574.1 508.9L501.0 473.1ZM798.2 609.5L1087.2 751.0L1083.6 758.5L794.5 616.9ZM493.7 469.5L581.4 512.5L577.7 519.9L490.0 476.9ZM787.1 613.3L1076.2 754.9L1072.6 762.4L783.5 620.7ZM490.0 476.9L570.4 516.3L566.7 523.7L486.3 484.2ZM776.1 617.1L1065.1 758.7L1061.5 766.2L772.5 624.5ZM750.3 613.7L757.7 617.3L754.1 624.7L746.7 621.1ZM765.1 620.9L1054.1 762.6L1050.5 770.1L761.4 628.3ZM717.2 606.7L724.6 610.3L720.9 617.7L713.5 614.1ZM731.9 613.9L1043.0 766.4L1039.4 773.9L728.3 621.3ZM530.0 524.1L559.3 538.4L555.6 545.8L526.3 531.4ZM662.0 588.8L684.1 599.6L680.4 607.1L658.4 596.2ZM706.2 610.5L1032.0 770.3L1028.4 777.8L702.5 617.9ZM497.0 517.1L562.9 549.4L559.2 556.8L493.3 524.5ZM658.4 596.2L1028.4 777.8L1024.8 785.3L654.7 603.7ZM500.6 528.1L559.2 556.8L555.5 564.2L496.9 535.4ZM647.3 600.0L1017.3 781.7L1013.7 789.2L643.6 607.5ZM496.9 535.4L562.9 567.8L559.2 575.2L493.2 542.8ZM636.3 603.9L1021.2 792.8L1017.6 800.4L632.6 611.3ZM500.5 546.4L573.8 582.4L570.1 589.8L496.8 553.8ZM625.2 607.7L1010.1 796.7L1006.5 804.2L621.5 615.1ZM496.8 553.8L577.5 593.4L573.8 600.9L493.1 561.2ZM592.2 600.7L606.8 607.9L603.1 615.3L588.5 608.1ZM614.2 611.5L1013.9 807.9L1010.3 815.4L610.5 618.9ZM500.4 564.8L1010.3 815.4L1006.7 822.9L496.7 572.2ZM496.7 572.2L1006.7 822.9L1003.1 830.5L493.0 579.6ZM493.0 579.6L1003.1 830.5L999.5 838.0L489.3 587.0ZM489.3 587.0L999.5 838.0L995.8 845.6L485.5 594.4ZM500.2 601.7L995.8 845.6L992.2 853.1L496.5 609.1ZM496.5 609.1L999.7 856.8L996.1 864.3L492.7 616.5ZM500.1 620.1L1003.5 868.0L999.9 875.6L496.4 627.5ZM496.4 627.5L717.4 736.4L713.7 743.9L492.6 635.0ZM724.8 740.1L732.2 743.7L728.5 751.2L721.1 747.6ZM739.6 747.4L1014.8 883.0L1011.2 890.5L735.9 754.9ZM492.6 635.0L566.1 671.2L562.4 678.7L488.9 642.4ZM573.5 674.8L625.1 700.3L621.4 707.7L569.8 682.3ZM632.5 703.9L684.2 729.4L680.5 736.8L628.8 711.4ZM743.3 758.5L1003.7 886.8L1000.1 894.4L739.7 766.0ZM488.9 642.4L614.0 704.1L610.3 711.6L485.2 649.9ZM621.4 707.7L665.7 729.6L662.0 737.1L617.7 715.2ZM747.1 769.7L910.5 850.3L906.9 857.8L743.4 777.2ZM918.0 853.9L985.2 887.0L981.5 894.6L914.4 861.5ZM485.2 649.9L536.6 675.2L532.9 682.7L481.4 657.3ZM544.0 678.9L602.9 707.9L599.2 715.4L540.3 686.3ZM610.3 711.6L625.1 718.8L621.3 726.3L606.6 719.0ZM632.4 722.5L639.8 726.1L636.1 733.6L628.7 730.0ZM750.8 780.8L914.4 861.5L910.7 869.0L747.1 788.4ZM921.8 865.2L959.1 883.6L955.5 891.1L918.2 872.7ZM481.4 657.3L562.4 697.2L558.6 704.7L477.7 664.8ZM569.7 700.9L591.8 711.8L588.1 719.2L566.0 708.3ZM599.2 715.4L614.0 722.7L610.3 730.2L595.5 722.9ZM754.5 792.0L918.2 872.7L914.5 880.3L750.9 799.5ZM925.6 876.4L940.5 883.8L936.9 891.3L922.0 884.0ZM485.0 668.4L580.7 715.6L577.0 723.1L481.3 675.8ZM588.1 719.2L602.9 726.5L599.2 734.0L584.4 726.7ZM750.9 799.5L922.0 884.0L918.3 891.5L747.2 807.1ZM496.0 683.1L569.7 719.4L565.9 726.9L492.3 690.6ZM577.0 723.1L584.4 726.7L580.7 734.2L573.3 730.6ZM739.8 803.4L903.4 884.2L899.7 891.7L736.1 810.9ZM492.3 690.6L558.6 723.3L554.8 730.8L488.5 698.0ZM565.9 726.9L573.3 730.6L569.6 738.1L562.2 734.4ZM743.5 814.6L884.8 884.4L881.2 892.0L739.8 822.1ZM488.5 698.0L510.6 708.9L506.9 716.4L484.8 705.5ZM518.0 712.6L547.5 727.1L543.7 734.6L514.2 720.1ZM554.8 730.8L577.0 741.7L573.2 749.2L551.1 738.3ZM739.8 822.1L866.3 884.6L862.6 892.2L736.1 829.7ZM492.2 709.1L499.5 712.8L495.8 720.3L488.4 716.6ZM506.9 716.4L536.4 731.0L532.6 738.5L503.1 723.9ZM543.7 734.6L565.9 745.6L562.1 753.1L540.0 742.1ZM728.7 826.0L847.7 884.8L844.0 892.4L725.0 833.5ZM495.8 720.3L525.3 734.8L521.5 742.3L492.0 727.7ZM532.6 738.5L569.5 756.7L565.8 764.2L528.9 746.0ZM725.0 833.5L829.1 885.0L825.4 892.6L721.3 841.1ZM484.7 724.1L514.1 738.7L510.4 746.2L480.9 731.6ZM521.5 742.3L565.8 764.2L562.1 771.7L517.8 749.8ZM713.9 837.4L765.9 863.1L762.2 870.7L710.2 845.0ZM780.8 870.5L810.5 885.2L806.8 892.8L777.1 878.0ZM488.3 735.2L503.0 742.5L499.3 750.0L484.6 742.7ZM510.4 746.2L554.7 768.1L550.9 775.6L506.7 753.7ZM702.7 841.3L739.9 859.7L736.2 867.2L699.0 848.8ZM499.3 750.0L543.6 771.9L539.8 779.4L495.6 757.5ZM684.2 841.5L728.8 863.5L725.1 871.1L680.5 849.0ZM488.2 753.9L554.6 786.7L550.9 794.3L484.4 761.4ZM665.7 841.7L717.6 867.4L713.9 875.0L661.9 849.2ZM491.8 765.0L558.3 797.9L554.5 805.4L488.1 772.5ZM654.5 845.6L706.5 871.3L702.8 878.9L650.8 853.1ZM488.1 772.5L554.5 805.4L550.8 813.0L484.3 780.0ZM650.8 853.1L710.2 882.5L706.5 890.1L647.1 860.7ZM491.7 783.7L506.4 791.0L502.7 798.5L487.9 791.2ZM513.8 794.7L543.4 809.3L539.7 816.8L510.1 802.2ZM647.1 860.7L699.1 886.4L695.4 894.0L643.4 868.2ZM487.9 791.2L524.9 809.5L521.1 817.0L484.2 798.7ZM532.3 813.2L539.7 816.8L535.9 824.4L528.5 820.7ZM635.9 864.6L680.5 886.6L676.8 894.2L632.2 872.1ZM484.2 798.7L535.9 824.4L532.2 831.9L480.4 806.3ZM632.2 872.1L661.9 886.8L658.2 894.4L628.5 879.7ZM480.4 806.3L524.8 828.2L521.0 835.8L476.7 813.8ZM628.5 879.7L643.4 887.0L639.6 894.6L624.8 887.2ZM476.7 813.8L498.8 824.8L495.1 832.3L472.9 821.3ZM506.2 828.4L513.6 832.1L509.9 839.7L502.5 836.0ZM480.3 825.0L509.9 839.7L506.1 847.2L476.5 832.5ZM483.9 836.2L506.1 847.2L502.4 854.8L480.2 843.7Z" fill="#303030" stroke="#303030" stroke-width="0.8" shape-rendering="crispEdges"/><path d="M1350.7 181.6L1358.1 185.1L1354.6 192.3L1347.3 188.8ZM1347.3 188.8L1369.3 199.3L1365.8 206.5L1343.8 196.0ZM1358.5 203.0L1387.9 217.1L1384.4 224.3L1355.1 210.3ZM1377.1 220.8L1391.8 227.8L1388.3 235.0L1373.6 228.0ZM965.0 32.6L972.3 36.0L968.7 43.2L961.5 39.7ZM1381.0 231.5L1388.3 235.0L1384.9 242.3L1377.5 238.8ZM961.5 39.7L968.7 43.2L965.2 50.3L958.0 46.8ZM1384.9 242.3L1392.2 245.8L1388.8 253.0L1381.4 249.5ZM958.0 46.8L965.2 50.3L961.7 57.4L954.4 54.0ZM1381.4 249.5L1410.9 263.6L1407.4 270.8L1378.0 256.7ZM954.4 54.0L961.7 57.4L958.1 64.6L950.9 61.1ZM954.6 71.7L961.9 75.2L958.3 82.3L951.1 78.9ZM951.1 78.9L965.6 85.8L962.0 93.0L947.5 86.0ZM954.8 89.5L962.0 93.0L958.5 100.1L951.2 96.6ZM951.2 96.6L958.5 100.1L955.0 107.3L947.7 103.8ZM947.7 103.8L955.0 107.3L951.4 114.5L944.2 111.0ZM1269.0 257.9L1276.3 261.4L1272.9 268.7L1265.5 265.2ZM835.4 58.8L878.9 79.6L875.3 86.8L831.8 65.9ZM951.4 114.5L958.7 117.9L955.1 125.1L947.9 121.6ZM1265.5 265.2L1280.2 272.2L1276.7 279.5L1262.0 272.4ZM868.1 83.3L875.3 86.8L871.7 93.9L864.5 90.5ZM947.9 121.6L955.1 125.1L951.6 132.3L944.3 128.8ZM1269.4 275.9L1284.1 283.0L1280.6 290.3L1265.9 283.2ZM871.7 93.9L879.0 97.4L875.4 104.6L868.2 101.1ZM944.3 128.8L951.6 132.3L948.0 139.5L940.8 136.0ZM1273.3 286.7L1280.6 290.3L1277.1 297.5L1269.8 294.0ZM868.2 101.1L882.7 108.1L879.1 115.2L864.6 108.3ZM940.8 136.0L962.6 146.5L959.1 153.6L937.2 143.2ZM1269.8 294.0L1277.1 297.5L1273.6 304.8L1266.3 301.2ZM871.9 111.8L879.1 115.2L875.6 122.4L868.3 118.9ZM951.8 150.1L995.5 171.1L991.9 178.3L948.2 157.3ZM1266.3 301.2L1273.6 304.8L1270.2 312.0L1262.8 308.5ZM868.3 118.9L882.8 125.9L879.3 133.1L864.7 126.1ZM1262.8 308.5L1270.2 312.0L1266.7 319.3L1259.3 315.8ZM872.0 129.6L879.3 133.1L875.7 140.2L868.4 136.8ZM1259.3 315.8L1266.7 319.3L1263.2 326.6L1255.8 323.1ZM868.4 136.8L875.7 140.2L872.1 147.4L864.9 143.9ZM1248.5 319.5L1263.2 326.6L1259.7 333.9L1245.0 326.8ZM864.9 143.9L872.1 147.4L868.6 154.6L861.3 151.1ZM1237.6 323.2L1252.3 330.3L1248.8 337.6L1234.1 330.5ZM861.3 151.1L868.6 154.6L865.0 161.8L857.7 158.3ZM1212.1 319.9L1241.5 334.1L1238.0 341.3L1208.5 327.2ZM857.7 158.3L865.0 161.8L861.4 169.0L854.1 165.5ZM1201.2 323.6L1215.9 330.7L1212.4 338.0L1197.7 330.9ZM854.1 165.5L861.4 169.0L857.8 176.2L850.6 172.7ZM1175.6 320.3L1205.0 334.5L1201.5 341.7L1172.1 327.6ZM850.6 172.7L857.8 176.2L854.3 183.4L847.0 179.9ZM1150.1 317.0L1179.5 331.1L1176.0 338.4L1146.6 324.2ZM839.7 176.4L854.3 183.4L850.7 190.6L836.1 183.6ZM1087.9 296.0L1153.9 327.8L1150.4 335.1L1084.3 303.2ZM828.9 180.1L843.4 187.1L839.8 194.3L825.3 187.3ZM1084.3 303.2L1091.7 306.8L1088.1 314.0L1080.8 310.5ZM810.8 180.3L832.6 190.8L829.0 198.0L807.2 187.5ZM1088.1 314.0L1095.5 317.6L1091.9 324.8L1084.6 321.3ZM814.4 191.0L821.7 194.5L818.1 201.7L810.8 198.2ZM1084.6 321.3L1091.9 324.8L1088.4 332.1L1081.1 328.6ZM810.8 198.2L818.1 201.7L814.5 208.9L807.3 205.4ZM1081.1 328.6L1088.4 332.1L1084.9 339.4L1077.5 335.8ZM807.3 205.4L814.5 208.9L810.9 216.1L803.7 212.6ZM931.1 265.2L960.3 279.3L956.8 286.5L927.5 272.4ZM1070.2 332.3L1084.9 339.4L1081.3 346.7L1066.6 339.6ZM803.7 212.6L810.9 216.1L807.3 223.4L800.1 219.8ZM927.5 272.4L934.9 276.0L931.3 283.2L924.0 279.7ZM1066.6 339.6L1074.0 343.1L1070.4 350.4L1063.1 346.9ZM1147.5 378.6L1184.3 396.4L1180.8 403.7L1144.0 385.9ZM800.1 219.8L807.3 223.4L803.7 230.6L796.5 227.1ZM916.7 276.2L931.3 283.2L927.7 290.5L913.1 283.4ZM1063.1 346.9L1070.4 350.4L1066.9 357.7L1059.6 354.2ZM1136.6 382.4L1151.3 389.5L1147.8 396.8L1133.1 389.7ZM1173.4 400.1L1180.8 403.7L1177.3 411.0L1169.9 407.5ZM796.5 227.1L803.7 230.6L800.1 237.8L792.9 234.3ZM913.1 283.4L920.4 286.9L916.8 294.2L909.5 290.7ZM1059.6 354.2L1066.9 357.7L1063.4 365.0L1056.0 361.5ZM1125.7 386.1L1140.4 393.2L1136.9 400.5L1122.2 393.4ZM792.9 234.3L800.1 237.8L796.5 245.0L789.3 241.5ZM909.5 290.7L916.8 294.2L913.3 301.5L905.9 297.9ZM1048.7 357.9L1063.4 365.0L1059.8 372.3L1045.1 365.2ZM1122.2 393.4L1129.5 397.0L1126.0 404.3L1118.6 400.7ZM789.3 241.5L796.5 245.0L792.9 252.3L785.7 248.8ZM905.9 297.9L913.3 301.5L909.7 308.7L902.4 305.2ZM1045.1 365.2L1052.5 368.7L1048.9 376.1L1041.6 372.5ZM1118.6 400.7L1126.0 404.3L1122.5 411.6L1115.1 408.1ZM785.7 248.8L792.9 252.3L789.3 259.5L782.1 256.0ZM902.4 305.2L909.7 308.7L906.1 316.0L898.8 312.5ZM1041.6 372.5L1048.9 376.1L1045.4 383.4L1038.0 379.8ZM1115.1 408.1L1122.5 411.6L1118.9 418.9L1111.6 415.4ZM898.8 312.5L906.1 316.0L902.5 323.3L895.2 319.7ZM1038.0 379.8L1045.4 383.4L1041.8 390.7L1034.5 387.1ZM1111.6 415.4L1118.9 418.9L1115.4 426.3L1108.0 422.7ZM895.2 319.7L909.8 326.8L906.2 334.1L891.6 327.0ZM1034.5 387.1L1041.8 390.7L1038.3 398.0L1030.9 394.4ZM1108.0 422.7L1115.4 426.3L1111.8 433.6L1104.5 430.0ZM898.9 330.5L913.6 337.6L910.0 344.9L895.3 337.8ZM1023.6 390.9L1038.3 398.0L1034.7 405.3L1020.0 398.2ZM1104.5 430.0L1111.8 433.6L1108.3 440.9L1100.9 437.4ZM902.7 341.4L917.3 348.5L913.7 355.7L899.1 348.7ZM1012.6 394.6L1027.3 401.7L1023.8 409.0L1009.1 401.9ZM1100.9 437.4L1115.7 444.5L1112.1 451.8L1097.4 444.7ZM906.4 352.2L921.0 359.3L917.5 366.6L902.8 359.5ZM1001.7 398.4L1016.4 405.5L1012.9 412.8L998.2 405.7ZM1104.8 448.3L1119.5 455.4L1116.0 462.8L1101.2 455.6ZM910.1 363.0L1005.5 409.2L1001.9 416.6L906.6 370.3ZM1093.8 452.0L1130.7 469.9L1127.2 477.3L1090.3 459.4ZM1082.9 455.8L1097.7 463.0L1094.1 470.3L1079.4 463.2ZM1049.9 448.9L1086.7 466.7L1083.2 474.1L1046.3 456.2ZM1039.0 452.6L1053.7 459.8L1050.1 467.1L1035.4 460.0ZM1028.0 456.4L1042.8 463.6L1039.2 470.9L1024.5 463.8ZM1024.5 463.8L1031.8 467.3L1028.3 474.7L1020.9 471.1ZM1020.9 471.1L1028.3 474.7L1024.7 482.0L1017.3 478.5ZM1017.3 478.5L1024.7 482.0L1021.1 489.4L1013.8 485.8ZM1013.8 485.8L1021.1 489.4L1017.5 496.8L1010.2 493.2ZM1010.2 493.2L1017.5 496.8L1014.0 504.1L1006.6 500.5ZM1343.8 655.3L1373.7 669.8L1370.1 677.2L1340.3 662.7ZM1006.6 500.5L1014.0 504.1L1010.4 511.5L1003.0 507.9ZM1362.7 673.6L1377.6 680.9L1374.1 688.3L1359.2 681.1ZM797.3 407.9L848.6 432.8L845.0 440.1L793.6 415.2ZM1003.0 507.9L1010.4 511.5L1006.8 518.9L999.4 515.3ZM1366.6 684.7L1374.1 688.3L1370.6 695.8L1363.1 692.2ZM837.6 436.6L859.6 447.3L856.0 454.6L834.0 443.9ZM999.4 515.3L1014.2 522.5L1010.6 529.8L995.9 522.7ZM1296.0 659.5L1303.4 663.1L1299.9 670.6L1292.5 667.0ZM1363.1 692.2L1378.1 699.4L1374.6 706.9L1359.6 699.6ZM848.7 451.1L863.4 458.2L859.8 465.5L845.1 458.4ZM1003.2 526.2L1010.6 529.8L1007.0 537.2L999.6 533.6ZM1285.0 663.3L1299.9 670.6L1296.4 678.0L1281.5 670.8ZM1367.1 703.3L1382.0 710.5L1378.5 718.0L1363.6 710.7ZM852.4 462.0L859.8 465.5L856.1 472.9L848.8 469.3ZM999.6 533.6L1014.4 540.8L1010.8 548.2L996.1 541.0ZM1274.0 667.2L1296.4 678.0L1292.9 685.5L1270.5 674.6ZM848.8 469.3L856.1 472.9L852.5 480.2L845.2 476.7ZM1003.4 544.6L1010.8 548.2L1007.2 555.6L999.9 552.0ZM1263.1 671.0L1278.0 678.3L1274.4 685.7L1259.5 678.5ZM1285.4 681.9L1292.9 685.5L1289.3 693.0L1281.9 689.3ZM845.2 476.7L859.9 483.8L856.3 491.2L841.6 484.0ZM999.9 552.0L1007.2 555.6L1003.7 563.0L996.3 559.4ZM1252.1 674.8L1267.0 682.1L1263.4 689.5L1248.5 682.3ZM1281.9 689.3L1289.3 693.0L1285.8 700.4L1278.4 696.8ZM848.9 487.6L856.3 491.2L852.6 498.6L845.3 495.0ZM996.3 559.4L1011.1 566.6L1007.5 574.0L992.7 566.8ZM1241.1 678.7L1256.0 685.9L1252.4 693.4L1237.5 686.1ZM1278.4 696.8L1285.8 700.4L1282.3 707.9L1274.8 704.3ZM845.3 495.0L852.6 498.6L849.0 505.9L841.7 502.3ZM1000.1 570.4L1022.3 581.2L1018.7 588.6L996.5 577.8ZM1096.3 617.3L1118.6 628.1L1115.0 635.6L1092.7 624.7ZM1163.1 649.9L1245.0 689.7L1241.5 697.2L1159.6 657.3ZM1274.8 704.3L1282.3 707.9L1278.8 715.4L1271.3 711.8ZM841.7 502.3L856.4 509.5L852.8 516.9L838.1 509.7ZM1011.3 585.0L1033.5 595.8L1029.9 603.2L1007.7 592.4ZM1085.3 621.1L1100.2 628.3L1096.6 635.8L1081.8 628.5ZM1107.6 632.0L1167.0 660.9L1163.4 668.4L1104.0 639.4ZM1271.3 711.8L1278.8 715.4L1275.2 722.9L1267.8 719.2ZM1353.5 751.8L1361.0 755.5L1357.5 763.0L1350.0 759.3ZM845.4 513.3L852.8 516.9L849.1 524.3L841.8 520.7ZM1022.5 599.6L1089.2 632.2L1085.6 639.6L1018.9 607.1ZM1163.4 668.4L1215.6 693.8L1212.0 701.3L1159.9 675.8ZM1267.8 719.2L1275.2 722.9L1271.7 730.4L1264.2 726.7ZM1350.0 759.3L1357.5 763.0L1353.9 770.5L1346.4 766.8ZM841.8 520.7L856.5 527.8L852.9 535.2L838.2 528.0ZM1152.4 672.2L1167.3 679.5L1163.8 686.9L1148.9 679.7ZM1204.6 697.6L1226.9 708.5L1223.4 716.0L1201.0 705.1ZM1256.7 723.1L1271.7 730.4L1268.1 737.9L1253.2 730.6ZM1346.4 766.8L1361.4 774.1L1357.9 781.7L1342.9 774.3ZM845.5 531.6L852.9 535.2L849.3 542.6L841.9 539.0ZM1141.4 676.0L1156.3 683.3L1152.8 690.8L1137.9 683.5ZM1215.9 712.4L1223.4 716.0L1219.8 723.5L1212.4 719.8ZM1253.2 730.6L1260.7 734.2L1257.1 741.7L1249.7 738.1ZM841.9 539.0L849.3 542.6L845.6 550.0L838.3 546.4ZM1137.9 683.5L1145.3 687.1L1141.8 694.6L1134.3 691.0ZM1212.4 719.8L1219.8 723.5L1216.3 731.0L1208.8 727.3ZM1242.2 734.4L1257.1 741.7L1253.6 749.2L1238.7 741.9ZM838.3 546.4L845.6 550.0L842.0 557.4L834.6 553.8ZM1126.9 687.3L1141.8 694.6L1138.2 702.1L1123.3 694.8ZM1208.8 727.3L1216.3 731.0L1212.7 738.5L1205.2 734.8ZM1238.7 741.9L1246.1 745.6L1242.6 753.0L1235.1 749.4ZM834.6 553.8L842.0 557.4L838.4 564.8L831.0 561.2ZM1123.3 694.8L1130.7 698.4L1127.2 705.9L1119.7 702.3ZM1205.2 734.8L1212.7 738.5L1209.2 746.0L1201.7 742.3ZM1235.1 749.4L1242.6 753.0L1239.0 760.5L1231.6 756.9ZM831.0 561.2L838.4 564.8L834.7 572.2L827.4 568.6ZM1119.7 702.3L1127.2 705.9L1123.6 713.4L1116.2 709.7ZM1201.7 742.3L1209.2 746.0L1205.6 753.5L1198.1 749.8ZM1231.6 756.9L1239.0 760.5L1235.5 768.1L1228.0 764.4ZM827.4 568.6L834.7 572.2L831.1 579.6L823.7 576.0ZM1116.2 709.7L1131.0 717.0L1127.5 724.5L1112.6 717.2ZM1198.1 749.8L1205.6 753.5L1202.0 761.0L1194.6 757.3ZM1220.5 760.8L1235.5 768.1L1231.9 775.6L1217.0 768.3ZM823.7 576.0L831.1 579.6L827.5 587.0L820.1 583.4ZM1120.0 720.9L1127.5 724.5L1123.9 732.0L1116.4 728.3ZM1194.6 757.3L1202.0 761.0L1198.5 768.5L1191.0 764.8ZM1209.5 764.6L1224.4 771.9L1220.9 779.4L1205.9 772.1ZM820.1 583.4L827.5 587.0L823.8 594.4L816.5 590.8ZM1116.4 728.3L1131.3 735.6L1127.8 743.1L1112.9 735.8ZM1183.5 761.2L1213.4 775.8L1209.9 783.3L1180.0 768.7ZM809.1 587.2L823.8 594.4L820.2 601.9L805.5 594.6ZM1120.3 739.5L1142.7 750.4L1139.1 757.9L1116.7 747.0ZM1165.1 761.4L1172.5 765.0L1168.9 772.5L1161.5 768.9ZM805.5 594.6L812.8 598.2L809.2 605.7L801.8 602.1ZM1131.6 754.3L1161.5 768.9L1157.9 776.4L1128.1 761.8ZM794.4 598.4L809.2 605.7L805.5 613.1L790.8 605.9ZM1105.7 750.8L1135.5 765.4L1131.9 772.9L1102.1 758.3ZM490.1 458.6L497.4 462.2L493.7 469.5L486.4 466.0ZM585.1 505.1L592.4 508.7L588.7 516.1L581.4 512.5ZM783.4 602.3L798.2 609.5L794.5 616.9L779.8 609.7ZM1087.2 751.0L1109.6 762.0L1106.0 769.5L1083.6 758.5ZM486.4 466.0L493.7 469.5L490.0 476.9L482.7 473.3ZM581.4 512.5L588.7 516.1L585.0 523.5L577.7 519.9ZM772.4 606.1L787.1 613.3L783.5 620.7L768.7 613.5ZM1076.2 754.9L1091.1 762.2L1087.5 769.7L1072.6 762.4ZM482.7 473.3L490.0 476.9L486.3 484.2L479.0 480.7ZM577.7 519.9L585.0 523.5L581.3 530.8L574.0 527.3ZM746.6 602.7L776.1 617.1L772.5 624.5L743.0 610.1ZM1065.1 758.7L1080.0 766.0L1076.4 773.5L1061.5 766.2ZM479.0 480.7L493.6 487.8L489.9 495.2L475.2 488.0ZM662.0 570.4L676.7 577.6L673.1 585.0L658.4 577.8ZM713.5 595.6L750.3 613.7L746.7 621.1L709.9 603.1ZM1054.1 762.6L1069.0 769.9L1065.4 777.4L1050.5 770.1ZM658.4 577.8L717.2 606.7L713.5 614.1L654.7 585.2ZM1043.0 766.4L1057.9 773.7L1054.3 781.3L1039.4 773.9ZM566.6 542.0L574.0 545.6L570.3 553.0L562.9 549.4ZM647.3 581.6L662.0 588.8L658.4 596.2L643.7 589.0ZM1039.4 773.9L1046.9 777.6L1043.3 785.1L1035.8 781.5ZM489.7 513.5L497.0 517.1L493.3 524.5L486.0 520.9ZM562.9 549.4L577.6 556.6L573.9 564.0L559.2 556.8ZM643.7 589.0L651.0 592.6L647.3 600.0L640.0 596.4ZM1028.4 777.8L1043.3 785.1L1039.7 792.6L1024.8 785.3ZM486.0 520.9L493.3 524.5L489.6 531.8L482.3 528.3ZM566.6 560.4L573.9 564.0L570.2 571.4L562.9 567.8ZM632.6 592.8L647.3 600.0L643.6 607.5L628.9 600.3ZM1024.8 785.3L1032.2 789.0L1028.6 796.5L1021.2 792.8ZM482.3 528.3L496.9 535.4L493.2 542.8L478.6 535.6ZM562.9 567.8L584.9 578.6L581.2 586.0L559.2 575.2ZM621.6 596.6L636.3 603.9L632.6 611.3L617.9 604.1ZM1021.2 792.8L1028.6 796.5L1025.0 804.0L1017.6 800.4ZM485.9 539.2L493.2 542.8L489.5 550.2L482.2 546.6ZM573.8 582.4L625.2 607.7L621.5 615.1L570.1 589.8ZM1017.6 800.4L1025.0 804.0L1021.4 811.5L1013.9 807.9ZM482.2 546.6L496.8 553.8L493.1 561.2L478.5 554.0ZM1013.9 807.9L1021.4 811.5L1017.8 819.1L1010.3 815.4ZM485.8 557.6L493.1 561.2L489.4 568.6L482.1 565.0ZM1010.3 815.4L1017.8 819.1L1014.2 826.6L1006.7 822.9ZM482.1 565.0L496.7 572.2L493.0 579.6L478.3 572.4ZM1006.7 822.9L1014.2 826.6L1010.5 834.2L1003.1 830.5ZM485.7 576.0L493.0 579.6L489.3 587.0L481.9 583.4ZM1003.1 830.5L1010.5 834.2L1006.9 841.7L999.5 838.0ZM481.9 583.4L489.3 587.0L485.5 594.4L478.2 590.8ZM999.5 838.0L1006.9 841.7L1003.3 849.2L995.8 845.6ZM478.2 590.8L492.9 598.0L489.1 605.5L474.5 598.2ZM995.8 845.6L1010.8 852.9L1007.1 860.5L992.2 853.1ZM481.8 601.9L496.5 609.1L492.7 616.5L478.1 609.3ZM999.7 856.8L1022.1 867.8L1018.5 875.4L996.1 864.3ZM485.4 612.9L492.7 616.5L489.0 623.9L481.7 620.3ZM1011.0 871.7L1033.4 882.7L1029.8 890.3L1007.4 879.3ZM481.7 620.3L489.0 623.9L485.3 631.4L477.9 627.7ZM477.9 627.7L485.3 631.4L481.6 638.8L474.2 635.2ZM691.5 733.0L743.3 758.5L739.7 766.0L687.9 740.5ZM474.2 635.2L481.6 638.8L477.8 646.2L470.5 642.6ZM665.7 729.6L695.3 744.1L691.6 751.6L662.0 737.1ZM732.3 762.4L747.1 769.7L743.4 777.2L728.6 769.9ZM470.5 642.6L477.8 646.2L474.1 653.7L466.7 650.1ZM647.2 729.8L669.4 740.7L665.7 748.2L643.5 737.3ZM736.0 773.5L750.8 780.8L747.1 788.4L732.3 781.0ZM466.7 650.1L481.4 657.3L477.7 664.8L463.0 657.5ZM614.0 722.7L650.9 740.9L647.2 748.4L610.3 730.2ZM739.7 784.7L747.1 788.4L743.4 795.9L736.0 792.2ZM470.3 661.1L485.0 668.4L481.3 675.8L466.6 668.6ZM602.9 726.5L617.6 733.8L613.9 741.3L599.2 734.0ZM736.0 792.2L743.4 795.9L739.8 803.4L732.3 799.7ZM474.0 672.2L488.7 679.5L484.9 686.9L470.2 679.7ZM584.4 726.7L606.5 737.7L602.8 745.2L580.7 734.2ZM732.3 799.7L739.8 803.4L736.1 810.9L728.6 807.3ZM477.6 683.3L484.9 686.9L481.2 694.4L473.8 690.8ZM580.7 734.2L588.1 737.9L584.3 745.4L577.0 741.7ZM728.6 807.3L736.1 810.9L732.4 818.5L725.0 814.8ZM473.8 690.8L488.5 698.0L484.8 705.5L470.1 698.2ZM577.0 741.7L584.3 745.4L580.6 752.9L573.2 749.2ZM725.0 814.8L732.4 818.5L728.7 826.0L721.3 822.3ZM477.4 701.9L484.8 705.5L481.1 713.0L473.7 709.3ZM573.2 749.2L580.6 752.9L576.9 760.4L569.5 756.7ZM721.3 822.3L728.7 826.0L725.0 833.5L717.6 829.9ZM473.7 709.3L488.4 716.6L484.7 724.1L470.0 716.8ZM569.5 756.7L576.9 760.4L573.2 767.9L565.8 764.2ZM710.1 826.2L725.0 833.5L721.3 841.1L706.4 833.7ZM477.3 720.5L484.7 724.1L480.9 731.6L473.6 727.9ZM565.8 764.2L573.2 767.9L569.5 775.4L562.1 771.7ZM699.0 830.1L713.9 837.4L710.2 845.0L695.3 837.6ZM473.6 727.9L488.3 735.2L484.6 742.7L469.8 735.4ZM562.1 771.7L569.5 775.4L565.7 782.9L558.3 779.2ZM673.1 826.6L702.7 841.3L699.0 848.8L669.4 834.2ZM747.3 863.3L792.0 885.4L788.3 893.0L743.6 870.9ZM477.2 739.1L484.6 742.7L480.8 750.2L473.4 746.6ZM558.3 779.2L565.7 782.9L562.0 790.4L554.6 786.7ZM669.4 834.2L676.8 837.8L673.1 845.4L665.7 841.7ZM728.8 863.5L751.1 874.6L747.4 882.1L725.1 871.1ZM473.4 746.6L480.8 750.2L477.1 757.7L469.7 754.1ZM554.6 786.7L569.4 794.1L565.7 801.6L550.9 794.3ZM717.6 867.4L732.5 874.8L728.8 882.3L713.9 875.0ZM477.1 757.7L484.4 761.4L480.7 768.9L473.3 765.2ZM558.3 797.9L565.7 801.6L561.9 809.1L554.5 805.4ZM713.9 875.0L721.4 878.7L717.7 886.2L710.2 882.5ZM473.3 765.2L488.1 772.5L484.3 780.0L469.6 772.7ZM710.2 882.5L717.7 886.2L714.0 893.8L706.5 890.1ZM476.9 776.4L484.3 780.0L480.6 787.6L473.2 783.9ZM473.2 783.9L480.6 787.6L476.8 795.1L469.4 791.4ZM469.4 791.4L484.2 798.7L480.4 806.3L465.7 798.9ZM473.0 802.6L480.4 806.3L476.7 813.8L469.3 810.1ZM469.3 810.1L476.7 813.8L472.9 821.3L465.5 817.6ZM465.5 817.6L480.3 825.0L476.5 832.5L461.8 825.2ZM469.2 828.9L476.5 832.5L472.8 840.1L465.4 836.4ZM472.8 840.1L487.6 847.4L483.8 855.0L469.0 847.6Z" fill="#b00e24" stroke="#b00e24" stroke-width="0.8" shape-rendering="crispEdges"/><path d="M1351.2 199.5L1358.5 203.0L1355.1 210.3L1347.7 206.7ZM1369.7 217.3L1377.1 220.8L1373.6 228.0L1366.3 224.5ZM1392.7 263.8L1400.1 267.3L1396.6 274.6L1389.3 271.0ZM943.6 57.6L950.9 61.1L947.3 68.2L940.1 64.8ZM947.5 86.0L954.8 89.5L951.2 96.6L944.0 93.2ZM846.2 55.1L853.4 58.6L849.9 65.7L842.6 62.3ZM867.9 65.5L875.2 69.0L871.6 76.2L864.4 72.7ZM879.0 97.4L886.2 100.9L882.7 108.1L875.4 104.6ZM879.1 115.2L886.4 118.7L882.8 125.9L875.6 122.4ZM944.5 146.6L951.8 150.1L948.2 157.3L941.0 153.8ZM1273.6 304.8L1281.0 308.3L1277.5 315.6L1270.2 312.0ZM955.5 160.8L977.3 171.3L973.8 178.5L952.0 168.0ZM984.6 174.8L991.9 178.3L988.4 185.5L981.1 182.0ZM1270.2 312.0L1277.5 315.6L1274.0 322.9L1266.7 319.3ZM879.3 133.1L886.5 136.6L883.0 143.7L875.7 140.2ZM875.7 140.2L883.0 143.7L879.4 150.9L872.1 147.4ZM872.1 147.4L879.4 150.9L875.8 158.1L868.6 154.6ZM865.0 161.8L872.2 165.3L868.7 172.5L861.4 169.0ZM861.4 169.0L868.7 172.5L865.1 179.7L857.8 176.2ZM1179.5 331.1L1194.2 338.2L1190.7 345.5L1176.0 338.4ZM1099.0 310.3L1106.3 313.8L1102.8 321.1L1095.5 317.6ZM1128.4 324.4L1143.0 331.5L1139.5 338.8L1124.8 331.7ZM1091.9 324.8L1099.3 328.4L1095.7 335.6L1088.4 332.1ZM818.1 201.7L825.4 205.2L821.8 212.4L814.5 208.9ZM949.3 265.0L956.6 268.5L953.0 275.8L945.7 272.2ZM814.5 208.9L821.8 212.4L818.2 219.6L810.9 216.1ZM1158.4 374.9L1165.7 378.4L1162.2 385.7L1154.8 382.2ZM1173.1 382.0L1180.5 385.5L1176.9 392.8L1169.6 389.3ZM810.9 216.1L818.2 219.6L814.6 226.9L807.3 223.4ZM1184.3 396.4L1191.7 399.9L1188.2 407.3L1180.8 403.7ZM905.8 279.9L913.1 283.4L909.5 290.7L902.2 287.1ZM1066.9 357.7L1074.2 361.3L1070.7 368.6L1063.4 365.0ZM1114.8 389.9L1122.2 393.4L1118.6 400.7L1111.3 397.2ZM796.5 245.0L803.8 248.6L800.2 255.8L792.9 252.3ZM898.6 294.4L905.9 297.9L902.4 305.2L895.1 301.7ZM1052.5 368.7L1059.8 372.3L1056.3 379.6L1048.9 376.1ZM1107.7 404.5L1115.1 408.1L1111.6 415.4L1104.2 411.8ZM891.5 308.9L898.8 312.5L895.2 319.7L887.9 316.2ZM1045.4 383.4L1052.7 386.9L1049.2 394.2L1041.8 390.7ZM1104.2 411.8L1111.6 415.4L1108.0 422.7L1100.7 419.1ZM913.9 373.9L921.2 377.4L917.6 384.7L910.3 381.2ZM928.5 381.0L950.5 391.7L947.0 399.0L925.0 388.3ZM957.9 395.2L965.2 398.8L961.6 406.1L954.3 402.5ZM972.6 402.3L987.3 409.4L983.7 416.8L969.0 409.6ZM1068.2 448.7L1082.9 455.8L1079.4 463.2L1064.6 456.0ZM1010.0 474.9L1017.3 478.5L1013.8 485.8L1006.4 482.2ZM1362.2 655.1L1369.7 658.7L1366.2 666.2L1358.7 662.5ZM1002.8 489.6L1010.2 493.2L1006.6 500.5L999.2 497.0ZM822.9 411.2L837.5 418.4L833.9 425.7L819.2 418.6ZM999.2 497.0L1006.6 500.5L1003.0 507.9L995.6 504.3ZM995.9 522.7L1003.2 526.2L999.6 533.6L992.3 530.0ZM856.1 472.9L863.5 476.5L859.9 483.8L852.5 480.2ZM996.1 541.0L1003.4 544.6L999.9 552.0L992.5 548.4ZM1278.0 678.3L1285.4 681.9L1281.9 689.3L1274.4 685.7ZM992.5 548.4L999.9 552.0L996.3 559.4L988.9 555.8ZM852.6 498.6L860.0 502.1L856.4 509.5L849.0 505.9ZM1364.5 748.0L1372.0 751.6L1368.5 759.1L1361.0 755.5ZM1167.0 660.9L1174.4 664.5L1170.9 672.0L1163.4 668.4ZM1181.9 668.2L1211.6 682.7L1208.1 690.2L1178.3 675.6ZM1263.8 708.1L1271.3 711.8L1267.8 719.2L1260.3 715.6ZM1015.1 596.0L1022.5 599.6L1018.9 607.1L1011.5 603.5ZM1111.4 643.0L1126.3 650.3L1122.7 657.7L1107.9 650.5ZM1133.7 653.9L1156.0 664.8L1152.4 672.2L1130.1 661.3ZM1041.1 617.9L1055.9 625.1L1052.3 632.6L1037.5 625.3ZM1063.3 628.7L1070.8 632.4L1067.2 639.8L1059.8 636.2ZM852.9 535.2L860.2 538.8L856.6 546.2L849.3 542.6ZM845.6 550.0L853.0 553.6L849.4 561.0L842.0 557.4ZM838.4 564.8L845.7 568.4L842.1 575.8L834.7 572.2ZM1209.2 746.0L1216.6 749.6L1213.1 757.1L1205.6 753.5ZM1224.1 753.3L1231.6 756.9L1228.0 764.4L1220.5 760.8ZM834.7 572.2L842.1 575.8L838.5 583.2L831.1 579.6ZM1205.6 753.5L1213.1 757.1L1209.5 764.6L1202.0 761.0ZM1202.0 761.0L1209.5 764.6L1205.9 772.1L1198.5 768.5ZM812.8 598.2L820.2 601.9L816.6 609.3L809.2 605.7ZM1116.7 747.0L1124.2 750.6L1120.6 758.1L1113.2 754.5ZM1098.3 747.2L1105.7 750.8L1102.1 758.3L1094.7 754.7ZM497.4 462.2L504.7 465.8L501.0 473.1L493.7 469.5ZM577.8 501.5L585.1 505.1L581.4 512.5L574.1 508.9ZM570.4 516.3L577.7 519.9L574.0 527.3L566.7 523.7ZM493.6 487.8L500.9 491.4L497.2 498.8L489.9 495.2ZM757.7 617.3L765.1 620.9L761.4 628.3L754.1 624.7ZM724.6 610.3L731.9 613.9L728.3 621.3L720.9 617.7ZM559.3 538.4L566.6 542.0L562.9 549.4L555.6 545.8ZM684.1 599.6L706.2 610.5L702.5 617.9L680.4 607.1ZM1032.0 770.3L1039.4 773.9L1035.8 781.5L1028.4 777.8ZM651.0 592.6L658.4 596.2L654.7 603.7L647.3 600.0ZM493.3 524.5L500.6 528.1L496.9 535.4L489.6 531.8ZM559.2 556.8L566.6 560.4L562.9 567.8L555.5 564.2ZM1017.3 781.7L1024.8 785.3L1021.2 792.8L1013.7 789.2ZM493.2 542.8L500.5 546.4L496.8 553.8L489.5 550.2ZM1010.1 796.7L1017.6 800.4L1013.9 807.9L1006.5 804.2ZM577.5 593.4L592.2 600.7L588.5 608.1L573.8 600.9ZM606.8 607.9L614.2 611.5L610.5 618.9L603.1 615.3ZM493.1 561.2L500.4 564.8L496.7 572.2L489.4 568.6ZM492.7 616.5L500.1 620.1L496.4 627.5L489.0 623.9ZM1003.5 868.0L1011.0 871.7L1007.4 879.3L999.9 875.6ZM489.0 623.9L496.4 627.5L492.6 635.0L485.3 631.4ZM717.4 736.4L724.8 740.1L721.1 747.6L713.7 743.9ZM732.2 743.7L739.6 747.4L735.9 754.9L728.5 751.2ZM1014.8 883.0L1022.3 886.6L1018.7 894.2L1011.2 890.5ZM485.3 631.4L492.6 635.0L488.9 642.4L481.6 638.8ZM684.2 729.4L691.5 733.0L687.9 740.5L680.5 736.8ZM481.6 638.8L488.9 642.4L485.2 649.9L477.8 646.2ZM477.8 646.2L485.2 649.9L481.4 657.3L474.1 653.7ZM625.1 718.8L632.4 722.5L628.7 730.0L621.3 726.3ZM639.8 726.1L647.2 729.8L643.5 737.3L636.1 733.6ZM747.1 788.4L754.5 792.0L750.9 799.5L743.4 795.9ZM743.4 795.9L750.9 799.5L747.2 807.1L739.8 803.4ZM484.9 686.9L492.3 690.6L488.5 698.0L481.2 694.4ZM573.3 730.6L580.7 734.2L577.0 741.7L569.6 738.1ZM736.1 810.9L743.5 814.6L739.8 822.1L732.4 818.5ZM732.4 818.5L739.8 822.1L736.1 829.7L728.7 826.0ZM484.8 705.5L492.2 709.1L488.4 716.6L481.1 713.0ZM565.9 745.6L573.2 749.2L569.5 756.7L562.1 753.1ZM765.9 863.1L780.8 870.5L777.1 878.0L762.2 870.7ZM554.7 768.1L562.1 771.7L558.3 779.2L550.9 775.6ZM739.9 859.7L747.3 863.3L743.6 870.9L736.2 867.2ZM484.6 742.7L491.9 746.4L488.2 753.9L480.8 750.2ZM550.9 775.6L558.3 779.2L554.6 786.7L547.2 783.1ZM676.8 837.8L684.2 841.5L680.5 849.0L673.1 845.4ZM484.4 761.4L491.8 765.0L488.1 772.5L480.7 768.9ZM706.5 871.3L713.9 875.0L710.2 882.5L702.8 878.9ZM484.3 780.0L491.7 783.7L487.9 791.2L480.6 787.6ZM480.6 787.6L487.9 791.2L484.2 798.7L476.8 795.1Z" fill="#8f0e40" stroke="#8f0e40" stroke-width="0.8" shape-rendering="crispEdges"/><path d="M1392.5 113.3L1429.1 130.7L1425.7 137.9L1389.0 120.4ZM1381.7 116.9L1433.0 141.4L1429.6 148.6L1378.3 124.1ZM1370.9 120.6L1466.3 166.0L1462.8 173.2L1367.5 127.8ZM1367.5 127.8L1470.2 176.7L1466.8 183.9L1364.1 135.0ZM1364.1 135.0L1393.4 148.9L1389.9 156.1L1360.6 142.2ZM1400.7 152.4L1474.1 187.4L1470.7 194.6L1397.3 159.6ZM1360.6 142.2L1389.9 156.1L1386.5 163.3L1357.2 149.3ZM1397.3 159.6L1478.1 198.2L1474.6 205.4L1393.8 166.8ZM1357.2 149.3L1386.5 163.3L1383.1 170.5L1353.7 156.5ZM1401.2 170.3L1467.3 201.9L1463.9 209.1L1397.7 177.5ZM1353.7 156.5L1390.4 174.0L1387.0 181.2L1350.3 163.7ZM1434.5 195.0L1478.6 216.1L1475.2 223.3L1431.0 202.3ZM1350.3 163.7L1423.7 198.7L1420.2 206.0L1346.8 170.9ZM1438.4 205.8L1482.5 226.8L1479.1 234.1L1434.9 213.0ZM1354.2 174.4L1427.6 209.5L1424.2 216.7L1350.7 181.6ZM1434.9 213.0L1486.5 237.6L1483.0 244.8L1431.5 220.2ZM1358.1 185.1L1424.2 216.7L1420.7 223.9L1354.6 192.3ZM1431.5 220.2L1483.0 244.8L1479.6 252.0L1428.1 227.4ZM1369.3 199.3L1420.7 223.9L1417.3 231.1L1365.8 206.5ZM1457.5 241.5L1479.6 252.0L1476.2 259.3L1454.1 248.7ZM986.6 25.3L1030.1 46.1L1026.6 53.2L983.0 32.4ZM1387.9 217.1L1476.2 259.3L1472.8 266.5L1384.4 224.3ZM975.8 28.9L1033.8 56.7L1030.3 63.8L972.3 36.0ZM1391.8 227.8L1472.8 266.5L1469.3 273.8L1388.3 235.0ZM972.3 36.0L1044.8 70.7L1041.3 77.9L968.7 43.2ZM1388.3 235.0L1469.3 273.8L1465.9 281.0L1384.9 242.3ZM968.7 43.2L997.7 57.0L994.2 64.2L965.2 50.3ZM1005.0 60.5L1041.3 77.9L1037.8 85.0L1001.5 67.7ZM1392.2 245.8L1458.5 277.5L1455.1 284.8L1388.8 253.0ZM965.2 50.3L994.2 64.2L990.7 71.3L961.7 57.4ZM1001.5 67.7L1037.8 85.0L1034.3 92.2L998.0 74.8ZM961.7 57.4L998.0 74.8L994.4 82.0L958.1 64.6ZM1005.2 78.3L1041.5 95.7L1038.0 102.8L1001.7 85.4ZM958.1 64.6L994.4 82.0L990.9 89.1L954.6 71.7ZM1009.0 88.9L1045.3 106.3L1041.8 113.5L1005.4 96.1ZM961.9 75.2L998.2 92.6L994.6 99.7L958.3 82.3ZM1005.4 96.1L1041.8 113.5L1038.3 120.6L1001.9 103.2ZM965.6 85.8L994.6 99.7L991.1 106.9L962.0 93.0ZM1009.2 106.7L1038.3 120.6L1034.7 127.8L1005.6 113.9ZM962.0 93.0L991.1 106.9L987.6 114.1L958.5 100.1ZM1005.6 113.9L1042.0 131.3L1038.5 138.5L1002.1 121.0ZM958.5 100.1L994.8 117.6L991.3 124.7L955.0 107.3ZM1002.1 121.0L1038.5 138.5L1035.0 145.7L998.6 128.2ZM955.0 107.3L991.3 124.7L987.8 131.9L951.4 114.5ZM1013.1 135.2L1035.0 145.7L1031.4 152.9L1009.6 142.4ZM1122.5 187.7L1159.1 205.2L1155.6 212.4L1119.0 194.9ZM958.7 117.9L1031.4 152.9L1027.9 160.0L955.1 125.1ZM1104.4 187.9L1162.9 215.9L1159.4 223.1L1100.9 195.1ZM1214.2 240.5L1265.5 265.2L1262.0 272.4L1210.7 247.8ZM824.6 62.5L868.1 83.3L864.5 90.5L821.0 69.6ZM955.1 125.1L1027.9 160.0L1024.4 167.2L951.6 132.3ZM1093.6 191.6L1166.7 226.7L1163.2 233.9L1090.1 198.8ZM1188.7 237.2L1269.4 275.9L1265.9 283.2L1185.2 244.4ZM813.8 66.1L871.7 93.9L868.2 101.1L810.2 73.3ZM951.6 132.3L1017.1 163.7L1013.6 170.9L948.0 139.5ZM1090.1 198.8L1273.3 286.7L1269.8 294.0L1086.5 206.0ZM803.0 69.8L868.2 101.1L864.6 108.3L799.4 76.9ZM962.6 146.5L1006.3 167.4L1002.7 174.6L959.1 153.6ZM1079.2 202.5L1123.1 223.5L1119.6 230.8L1075.7 209.7ZM1130.4 227.0L1269.8 294.0L1266.3 301.2L1126.9 234.3ZM799.4 76.9L871.9 111.8L868.3 118.9L795.8 84.1ZM1075.7 209.7L1097.6 220.2L1094.1 227.4L1072.2 216.9ZM1112.3 227.2L1119.6 230.8L1116.1 238.0L1108.7 234.5ZM1126.9 234.3L1222.2 280.1L1218.7 287.3L1123.4 241.5ZM1244.2 290.6L1266.3 301.2L1262.8 308.5L1240.7 297.9ZM795.8 84.1L824.8 98.0L821.2 105.2L792.3 91.2ZM839.3 105.0L868.3 118.9L864.7 126.1L835.7 112.1ZM1072.2 216.9L1101.4 231.0L1097.9 238.2L1068.7 224.1ZM1108.7 234.5L1116.1 238.0L1112.5 245.2L1105.2 241.7ZM1130.7 245.0L1189.3 273.2L1185.8 280.5L1127.2 252.3ZM1196.7 276.7L1204.0 280.3L1200.5 287.5L1193.2 284.0ZM1226.0 290.8L1262.8 308.5L1259.3 315.8L1222.5 298.1ZM792.3 91.2L872.0 129.6L868.4 136.8L788.7 98.4ZM1068.7 224.1L1097.9 238.2L1094.4 245.4L1065.1 231.3ZM1105.2 241.7L1119.9 248.7L1116.3 256.0L1101.7 248.9ZM1127.2 252.3L1178.5 276.9L1175.0 284.2L1123.7 259.5ZM1207.9 291.0L1259.3 315.8L1255.8 323.1L1204.4 298.3ZM788.7 98.4L824.9 115.8L821.3 123.0L785.1 105.6ZM832.1 119.3L868.4 136.8L864.9 143.9L828.6 126.5ZM1065.1 231.3L1094.4 245.4L1090.9 252.7L1061.6 238.6ZM1101.7 248.9L1123.7 259.5L1120.2 266.7L1098.2 256.2ZM1131.0 263.0L1145.7 270.1L1142.1 277.3L1127.5 270.3ZM1182.3 287.7L1248.5 319.5L1245.0 326.8L1178.8 295.0ZM770.6 98.6L828.6 126.5L825.0 133.7L767.0 105.8ZM835.8 130.0L864.9 143.9L861.3 151.1L832.2 137.1ZM1061.6 238.6L1090.9 252.7L1087.3 259.9L1058.1 245.8ZM1105.5 259.7L1120.2 266.7L1116.6 274.0L1102.0 266.9ZM1149.5 280.8L1237.6 323.2L1234.1 330.5L1146.0 288.1ZM759.8 102.3L825.0 133.7L821.4 140.8L756.2 109.4ZM832.2 137.1L861.3 151.1L857.7 158.3L828.7 144.3ZM1058.1 245.8L1212.1 319.9L1208.5 327.2L1054.5 253.0ZM749.0 106.0L799.7 130.4L796.1 137.5L745.4 113.1ZM828.7 144.3L857.7 158.3L854.1 165.5L825.1 151.5ZM1054.5 253.0L1201.2 323.6L1197.7 330.9L1051.0 260.3ZM745.4 113.1L788.8 134.0L785.2 141.2L741.8 120.3ZM817.8 148.0L854.1 165.5L850.6 172.7L814.3 155.2ZM1058.3 263.8L1175.6 320.3L1172.1 327.6L1054.8 271.1ZM741.8 120.3L770.7 134.2L767.1 141.4L738.2 127.5ZM785.2 141.2L850.6 172.7L847.0 179.9L781.6 148.4ZM1062.1 274.6L1150.1 317.0L1146.6 324.2L1058.6 281.8ZM738.2 127.5L839.7 176.4L836.1 183.6L734.6 134.6ZM1036.6 271.3L1080.5 292.4L1077.0 299.7L1033.1 278.5ZM734.6 134.6L828.9 180.1L825.3 187.3L731.0 141.8ZM1025.7 275.0L1084.3 303.2L1080.8 310.5L1022.2 282.2ZM738.2 145.3L810.8 180.3L807.2 187.5L734.6 152.5ZM1022.2 282.2L1088.1 314.0L1084.6 321.3L1018.7 289.5ZM741.8 156.0L814.4 191.0L810.8 198.2L738.2 163.2ZM1018.7 289.5L1084.6 321.3L1081.1 328.6L1015.1 296.7ZM752.7 170.2L810.8 198.2L807.3 205.4L749.1 177.4ZM1007.8 293.2L1037.1 307.3L1033.5 314.6L1004.2 300.5ZM1051.7 314.4L1081.1 328.6L1077.5 335.8L1048.2 321.7ZM749.1 177.4L807.3 205.4L803.7 212.6L745.5 184.6ZM1004.2 300.5L1070.2 332.3L1066.6 339.6L1000.7 307.7ZM745.5 184.6L774.6 198.6L771.0 205.8L741.9 191.8ZM781.9 202.1L803.7 212.6L800.1 219.8L778.3 209.3ZM934.9 276.0L971.4 293.6L967.8 300.9L931.3 283.2ZM1000.7 307.7L1066.6 339.6L1063.1 346.9L997.1 315.0ZM741.9 191.8L771.0 205.8L767.4 213.0L738.3 199.0ZM778.3 209.3L800.1 219.8L796.5 227.1L774.7 216.5ZM931.3 283.2L1063.1 346.9L1059.6 354.2L927.7 290.5ZM1151.3 389.5L1173.4 400.1L1169.9 407.5L1147.8 396.8ZM738.3 199.0L796.5 227.1L792.9 234.3L734.7 206.2ZM920.4 286.9L1059.6 354.2L1056.0 361.5L916.8 294.2ZM1140.4 393.2L1192.0 418.1L1188.5 425.5L1136.9 400.5ZM734.7 206.2L792.9 234.3L789.3 241.5L731.1 213.4ZM916.8 294.2L1048.7 357.9L1045.1 365.2L913.3 301.5ZM1129.5 397.0L1195.9 429.0L1192.3 436.4L1126.0 404.3ZM738.4 216.9L789.3 241.5L785.7 248.8L734.8 224.1ZM913.3 301.5L942.5 315.6L938.9 322.9L909.7 308.7ZM957.1 322.7L1001.1 343.9L997.5 351.2L953.6 330.0ZM1015.8 351.0L1045.1 365.2L1041.6 372.5L1012.2 358.3ZM1126.0 404.3L1199.7 439.9L1196.2 447.3L1122.5 411.6ZM742.0 227.7L778.4 245.2L774.8 252.5L738.4 234.9ZM909.7 308.7L938.9 322.9L935.4 330.1L906.1 316.0ZM953.6 330.0L997.5 351.2L994.0 358.5L950.0 337.2ZM1012.2 358.3L1041.6 372.5L1038.0 379.8L1008.6 365.6ZM1122.5 411.6L1144.6 422.3L1141.0 429.6L1118.9 418.9ZM1159.3 429.4L1196.2 447.3L1192.7 454.6L1155.8 436.8ZM745.7 238.4L767.5 249.0L763.9 256.2L742.1 245.6ZM906.1 316.0L942.7 333.7L939.1 341.0L902.5 323.3ZM1008.6 365.6L1038.0 379.8L1034.5 387.1L1005.1 372.9ZM1118.9 418.9L1148.4 433.2L1144.9 440.5L1115.4 426.3ZM1155.8 436.8L1163.2 440.3L1159.6 447.7L1152.3 444.1ZM1170.5 443.9L1192.7 454.6L1189.2 462.0L1167.0 451.2ZM909.8 326.8L1034.5 387.1L1030.9 394.4L906.2 334.1ZM1115.4 426.3L1144.9 440.5L1141.3 447.9L1111.8 433.6ZM1167.0 451.2L1189.2 462.0L1185.6 469.3L1163.5 458.6ZM913.6 337.6L1023.6 390.9L1020.0 398.2L910.0 344.9ZM1111.8 433.6L1185.6 469.3L1182.1 476.7L1108.3 440.9ZM917.3 348.5L1012.6 394.6L1009.1 401.9L913.7 355.7ZM1115.7 444.5L1182.1 476.7L1178.6 484.0L1112.1 451.8ZM921.0 359.3L1001.7 398.4L998.2 405.7L917.5 366.6ZM1119.5 455.4L1171.2 480.4L1167.7 487.8L1116.0 462.8ZM1097.7 463.0L1127.2 477.3L1123.6 484.6L1094.1 470.3ZM1260.4 541.8L1297.5 559.8L1294.0 567.2L1256.9 549.2ZM1086.7 466.7L1153.2 498.9L1149.6 506.3L1083.2 474.1ZM1242.0 542.0L1301.4 570.8L1297.9 578.2L1238.5 549.4ZM1053.7 459.8L1157.0 509.9L1153.5 517.3L1050.1 467.1ZM1231.1 545.8L1297.9 578.2L1294.4 585.6L1227.6 553.2ZM1042.8 463.6L1160.9 520.9L1157.4 528.2L1039.2 470.9ZM1220.1 549.6L1301.8 589.2L1298.3 596.6L1216.6 557.0ZM1031.8 467.3L1098.2 499.5L1094.7 506.9L1028.3 474.7ZM1105.6 503.1L1157.4 528.2L1153.8 535.6L1102.0 510.5ZM1172.2 535.4L1201.8 549.8L1198.2 557.2L1168.6 542.8ZM1216.6 557.0L1298.3 596.6L1294.8 604.0L1213.1 564.4ZM1028.3 474.7L1094.7 506.9L1091.1 514.3L1024.7 482.0ZM1102.0 510.5L1109.4 514.1L1105.9 521.5L1098.5 517.9ZM1124.2 521.3L1205.7 560.8L1202.1 568.2L1120.7 528.6ZM1213.1 564.4L1242.8 578.8L1239.2 586.2L1209.5 571.8ZM1265.0 589.6L1317.1 614.9L1313.6 622.3L1261.5 597.0ZM1024.7 482.0L1054.2 496.4L1050.6 503.7L1021.1 489.4ZM1061.6 499.9L1091.1 514.3L1087.5 521.7L1058.0 507.3ZM1113.3 525.0L1254.1 593.4L1250.6 600.8L1109.7 532.4ZM1261.5 597.0L1321.0 625.9L1317.5 633.4L1258.0 604.4ZM1021.1 489.4L1050.6 503.7L1047.1 511.1L1017.5 496.8ZM1080.2 518.1L1250.6 600.8L1247.0 608.3L1076.6 525.4ZM1258.0 604.4L1317.5 633.4L1314.0 640.8L1254.5 611.9ZM1017.5 496.8L1054.4 514.7L1050.9 522.1L1014.0 504.1ZM1069.2 521.9L1165.4 568.6L1161.8 576.0L1065.6 529.2ZM1172.8 572.2L1276.8 622.7L1273.3 630.1L1169.3 579.6ZM1284.2 626.3L1314.0 640.8L1310.5 648.2L1280.7 633.8ZM1014.0 504.1L1050.9 522.1L1047.3 529.4L1010.4 511.5ZM1065.6 529.2L1161.8 576.0L1158.3 583.4L1062.1 536.6ZM1169.3 579.6L1265.8 626.5L1262.3 634.0L1165.7 587.0ZM1280.7 633.8L1310.5 648.2L1307.0 655.7L1277.2 641.2ZM1325.4 655.5L1362.7 673.6L1359.2 681.1L1321.9 662.9ZM1010.4 511.5L1091.6 551.0L1088.1 558.4L1006.8 518.9ZM1099.0 554.6L1106.4 558.2L1102.9 565.6L1095.5 562.0ZM1121.3 565.4L1150.9 579.8L1147.3 587.2L1117.7 572.8ZM1165.7 587.0L1262.3 634.0L1258.8 641.4L1162.2 594.4ZM1269.7 637.6L1366.6 684.7L1363.1 692.2L1266.2 645.0ZM801.0 418.8L837.6 436.6L834.0 443.9L797.3 426.1ZM1014.2 522.5L1051.1 540.4L1047.5 547.8L1010.6 529.8ZM1058.5 544.0L1088.1 558.4L1084.5 565.8L1054.9 551.4ZM1117.7 572.8L1199.3 612.5L1195.7 619.9L1114.1 580.2ZM1214.1 619.7L1236.4 630.5L1232.9 638.0L1210.6 627.1ZM1243.9 634.2L1296.0 659.5L1292.5 667.0L1240.3 641.6ZM1303.4 663.1L1363.1 692.2L1359.6 699.6L1299.9 670.6ZM790.0 422.5L848.7 451.1L845.1 458.4L786.4 429.8ZM1010.6 529.8L1047.5 547.8L1044.0 555.2L1007.0 537.2ZM1062.3 555.0L1158.6 601.8L1155.1 609.3L1058.8 562.4ZM1166.0 605.5L1232.9 638.0L1229.4 645.4L1162.5 612.9ZM1240.3 641.6L1285.0 663.3L1281.5 670.8L1236.8 649.0ZM1299.9 670.6L1367.1 703.3L1363.6 710.7L1296.4 678.0ZM779.1 426.3L852.4 462.0L848.8 469.3L775.4 433.6ZM1014.4 540.8L1051.4 558.8L1047.8 566.2L1010.8 548.2ZM1073.6 569.6L1155.1 609.3L1151.5 616.7L1070.0 577.0ZM1162.5 612.9L1229.4 645.4L1225.8 652.9L1158.9 620.3ZM1236.8 649.0L1274.0 667.2L1270.5 674.6L1233.3 656.5ZM1296.4 678.0L1326.2 692.6L1322.7 700.0L1292.9 685.5ZM1333.7 696.2L1371.1 714.4L1367.6 721.9L1330.2 703.7ZM775.4 433.6L848.8 469.3L845.2 476.7L771.8 440.9ZM1010.8 548.2L1070.0 577.0L1066.4 584.4L1007.2 555.6ZM1092.2 587.8L1151.5 616.7L1148.0 624.1L1088.6 595.2ZM1158.9 620.3L1263.1 671.0L1259.5 678.5L1155.4 627.7ZM1292.9 685.5L1322.7 700.0L1319.2 707.5L1289.3 693.0ZM1330.2 703.7L1367.6 721.9L1364.0 729.4L1326.7 711.2ZM771.8 440.9L845.2 476.7L841.6 484.0L768.2 448.3ZM1007.2 555.6L1252.1 674.8L1248.5 682.3L1003.7 563.0ZM1289.3 693.0L1319.2 707.5L1315.7 715.0L1285.8 700.4ZM1334.1 714.8L1364.0 729.4L1360.5 736.8L1330.6 722.3ZM768.2 448.3L848.9 487.6L845.3 495.0L764.5 455.6ZM1011.1 566.6L1241.1 678.7L1237.5 686.1L1007.5 574.0ZM1285.8 700.4L1323.1 718.6L1319.6 726.1L1282.3 707.9ZM1330.6 722.3L1353.0 733.2L1349.5 740.7L1327.1 729.8ZM764.5 455.6L845.3 495.0L841.7 502.3L760.9 463.0ZM1022.3 581.2L1096.3 617.3L1092.7 624.7L1018.7 588.6ZM1118.6 628.1L1163.1 649.9L1159.6 657.3L1115.0 635.6ZM1282.3 707.9L1319.6 726.1L1316.1 733.6L1278.8 715.4ZM1327.1 729.8L1357.0 744.3L1353.5 751.8L1323.6 737.2ZM768.2 466.5L804.9 484.4L801.3 491.8L764.6 473.9ZM812.3 488.0L841.7 502.3L838.1 509.7L808.7 495.4ZM1033.5 595.8L1085.3 621.1L1081.8 628.5L1029.9 603.2ZM1278.8 715.4L1353.5 751.8L1350.0 759.3L1275.2 722.9ZM771.9 477.5L801.3 491.8L797.7 499.2L768.3 484.8ZM808.7 495.4L845.4 513.3L841.8 520.7L805.0 502.7ZM1275.2 722.9L1342.5 755.7L1339.0 763.2L1271.7 730.4ZM768.3 484.8L797.7 499.2L794.0 506.5L764.7 492.2ZM812.4 506.3L841.8 520.7L838.2 528.0L808.7 513.7ZM1167.3 679.5L1204.6 697.6L1201.0 705.1L1163.8 686.9ZM1271.7 730.4L1346.4 766.8L1342.9 774.3L1268.1 737.9ZM764.7 492.2L801.4 510.1L797.8 517.5L761.0 499.6ZM808.7 513.7L845.5 531.6L841.9 539.0L805.1 521.1ZM1156.3 683.3L1215.9 712.4L1212.4 719.8L1152.8 690.8ZM1260.7 734.2L1350.4 778.0L1346.9 785.5L1257.1 741.7ZM761.0 499.6L797.8 517.5L794.1 524.9L757.4 506.9ZM812.5 524.7L841.9 539.0L838.3 546.4L808.8 532.0ZM1145.3 687.1L1212.4 719.8L1208.8 727.3L1141.8 694.6ZM1257.1 741.7L1294.5 759.9L1291.0 767.4L1253.6 749.2ZM1316.9 770.9L1339.4 781.9L1335.9 789.4L1313.4 778.4ZM764.7 510.5L801.5 528.4L797.8 535.8L761.1 517.9ZM808.8 532.0L838.3 546.4L834.6 553.8L805.2 539.4ZM1141.8 694.6L1208.8 727.3L1205.2 734.8L1138.2 702.1ZM1246.1 745.6L1276.0 760.1L1272.5 767.6L1242.6 753.0ZM1305.9 774.8L1335.9 789.4L1332.3 796.9L1302.4 782.3ZM761.1 517.9L797.8 535.8L794.2 543.2L757.4 525.3ZM805.2 539.4L834.6 553.8L831.0 561.2L801.6 546.8ZM1130.7 698.4L1168.0 716.6L1164.4 724.1L1127.2 705.9ZM1175.4 720.3L1205.2 734.8L1201.7 742.3L1171.9 727.7ZM1242.6 753.0L1272.5 767.6L1268.9 775.2L1239.0 760.5ZM1279.9 771.3L1332.3 796.9L1328.8 804.4L1276.4 778.8ZM742.7 518.1L786.8 539.6L783.2 547.0L739.1 525.5ZM794.2 543.2L831.0 561.2L827.4 568.6L790.6 550.6ZM1127.2 705.9L1164.4 724.1L1160.8 731.6L1123.6 713.4ZM1171.9 727.7L1201.7 742.3L1198.1 749.8L1168.3 735.2ZM1239.0 760.5L1268.9 775.2L1265.4 782.7L1235.5 768.1ZM1276.4 778.8L1328.8 804.4L1325.3 811.9L1272.9 786.3ZM731.8 521.9L783.2 547.0L779.6 554.4L728.1 529.2ZM790.6 550.6L827.4 568.6L823.7 576.0L786.9 558.0ZM1131.0 717.0L1160.8 731.6L1157.3 739.1L1127.5 724.5ZM1168.3 735.2L1198.1 749.8L1194.6 757.3L1164.7 742.7ZM1235.5 768.1L1265.4 782.7L1261.8 790.2L1231.9 775.6ZM1280.3 790.0L1325.3 811.9L1321.7 819.5L1276.8 797.5ZM706.1 518.5L779.6 554.4L775.9 561.8L702.4 525.9ZM786.9 558.0L823.7 576.0L820.1 583.4L783.3 565.4ZM1127.5 724.5L1194.6 757.3L1191.0 764.8L1123.9 732.0ZM1224.4 771.9L1269.3 793.8L1265.8 801.4L1220.9 779.4ZM1284.3 801.2L1314.2 815.8L1310.7 823.4L1280.7 808.7ZM461.2 407.9L483.0 418.6L479.3 425.9L457.5 415.2ZM695.1 522.3L768.6 558.2L764.9 565.6L691.4 529.6ZM775.9 561.8L820.1 583.4L816.5 590.8L772.3 569.2ZM1131.3 735.6L1183.5 761.2L1180.0 768.7L1127.8 743.1ZM1213.4 775.8L1273.3 805.0L1269.7 812.6L1209.9 783.3ZM1280.7 808.7L1310.7 823.4L1307.2 830.9L1277.2 816.2ZM457.5 415.2L486.6 429.5L482.9 436.8L453.8 422.5ZM676.7 522.5L750.2 558.4L746.5 565.8L673.1 529.8ZM764.9 565.6L809.1 587.2L805.5 594.6L761.3 573.0ZM1142.7 750.4L1165.1 761.4L1161.5 768.9L1139.1 757.9ZM1172.5 765.0L1262.2 808.9L1258.7 816.4L1168.9 772.5ZM1277.2 816.2L1307.2 830.9L1303.6 838.4L1273.6 823.8ZM453.8 422.5L490.2 440.4L486.5 447.7L450.1 429.9ZM621.7 504.7L724.5 555.0L720.8 562.4L618.1 512.1ZM746.5 565.8L805.5 594.6L801.8 602.1L742.9 573.2ZM1161.5 768.9L1266.2 820.1L1262.6 827.6L1157.9 776.4ZM1281.1 827.4L1303.6 838.4L1300.1 846.0L1277.6 835.0ZM450.1 429.9L493.8 451.3L490.1 458.6L446.3 437.2ZM610.7 508.5L706.1 555.2L702.5 562.6L607.1 515.9ZM728.2 566.0L794.4 598.4L790.8 605.9L724.5 573.4ZM1135.5 765.4L1225.2 809.3L1221.6 816.8L1131.9 772.9ZM1240.1 816.6L1270.1 831.3L1266.5 838.8L1236.6 824.2ZM1277.6 835.0L1300.1 846.0L1296.5 853.5L1274.0 842.5ZM446.3 437.2L453.6 440.8L449.9 448.1L442.6 444.5ZM460.9 444.3L490.1 458.6L486.4 466.0L457.2 451.7ZM592.4 508.7L687.8 555.4L684.1 562.8L588.7 516.1ZM702.5 562.6L783.4 602.3L779.8 609.7L698.8 570.0ZM1109.6 762.0L1199.2 805.8L1195.6 813.4L1106.0 769.5ZM1229.1 820.5L1304.0 857.2L1300.5 864.8L1225.5 828.0ZM442.6 444.5L449.9 448.1L446.2 455.4L438.9 451.9ZM457.2 451.7L486.4 466.0L482.7 473.3L453.5 459.0ZM588.7 516.1L772.4 606.1L768.7 613.5L585.0 523.5ZM1091.1 762.2L1180.6 806.0L1177.1 813.6L1087.5 769.7ZM1195.6 813.4L1203.1 817.0L1199.5 824.6L1192.0 820.9ZM1210.6 820.7L1285.5 857.4L1281.9 865.0L1207.0 828.2ZM438.9 451.9L446.2 455.4L442.5 462.8L435.2 459.2ZM453.5 459.0L482.7 473.3L479.0 480.7L449.8 466.4ZM585.0 523.5L614.3 537.8L610.7 545.2L581.3 530.8ZM636.4 548.6L746.6 602.7L743.0 610.1L632.7 556.0ZM1080.0 766.0L1162.1 806.3L1158.5 813.8L1076.4 773.5ZM1184.5 817.2L1274.4 861.3L1270.9 868.8L1181.0 824.8ZM435.2 459.2L479.0 480.7L475.2 488.0L431.5 466.6ZM581.3 530.8L618.0 548.8L614.3 556.2L577.6 538.2ZM625.3 552.4L662.0 570.4L658.4 577.8L621.6 559.8ZM676.7 577.6L713.5 595.6L709.9 603.1L673.1 585.0ZM1069.0 769.9L1143.6 806.5L1140.0 814.0L1065.4 777.4ZM1158.5 813.8L1240.9 854.1L1237.3 861.7L1155.0 821.3ZM431.5 466.6L482.5 491.6L478.8 499.0L427.7 473.9ZM577.6 538.2L614.3 556.2L610.6 563.6L574.0 545.6ZM621.6 559.8L658.4 577.8L654.7 585.2L618.0 567.2ZM1057.9 773.7L1117.6 803.0L1114.0 810.5L1054.3 781.3ZM1147.5 817.6L1222.3 854.3L1218.8 861.9L1143.9 825.2ZM427.7 473.9L493.4 506.1L489.7 513.5L424.0 481.3ZM574.0 545.6L647.3 581.6L643.7 589.0L570.3 553.0ZM1046.9 777.6L1099.1 803.2L1095.5 810.7L1043.3 785.1ZM1136.4 821.5L1203.8 854.5L1200.2 862.1L1132.8 829.1ZM424.0 481.3L489.7 513.5L486.0 520.9L420.3 488.6ZM577.6 556.6L643.7 589.0L640.0 596.4L573.9 564.0ZM1043.3 785.1L1080.6 803.4L1077.0 810.9L1039.7 792.6ZM1117.9 821.7L1177.7 851.1L1174.2 858.6L1114.3 829.3ZM420.3 488.6L434.9 495.8L431.2 503.1L416.6 496.0ZM449.5 502.9L486.0 520.9L482.3 528.3L445.8 510.3ZM573.9 564.0L632.6 592.8L628.9 600.3L570.2 571.4ZM1032.2 789.0L1069.5 807.3L1065.9 814.8L1028.6 796.5ZM1099.4 821.9L1159.2 851.3L1155.6 858.8L1095.8 829.5ZM416.6 496.0L438.5 506.7L434.7 514.1L412.8 503.3ZM460.4 517.5L482.3 528.3L478.6 535.6L456.6 524.9ZM584.9 578.6L621.6 596.6L617.9 604.1L581.2 586.0ZM1028.6 796.5L1065.9 814.8L1062.3 822.3L1025.0 804.0ZM1073.4 818.5L1140.6 851.5L1137.0 859.0L1069.8 826.0ZM412.8 503.3L442.0 517.7L438.3 525.1L409.1 510.7ZM449.3 521.3L485.9 539.2L482.2 546.6L445.6 528.7ZM1025.0 804.0L1062.3 822.3L1058.7 829.9L1021.4 811.5ZM1069.8 826.0L1122.1 851.7L1118.5 859.2L1066.2 833.5ZM409.1 510.7L438.3 525.1L434.6 532.4L405.4 518.1ZM445.6 528.7L482.2 546.6L478.5 554.0L441.9 536.0ZM1021.4 811.5L1043.8 822.5L1040.2 830.1L1017.8 819.1ZM1051.2 826.2L1066.2 833.5L1062.6 841.1L1047.6 833.7ZM1073.6 837.2L1103.5 851.9L1099.9 859.4L1070.0 844.8ZM405.4 518.1L434.6 532.4L430.8 539.8L401.6 525.5ZM441.9 536.0L485.8 557.6L482.1 565.0L438.2 543.4ZM1017.8 819.1L1047.6 833.7L1044.0 841.3L1014.2 826.6ZM1062.6 841.1L1070.0 844.8L1066.4 852.3L1059.0 848.6ZM1077.5 848.4L1099.9 859.4L1096.3 867.0L1073.9 856.0ZM401.6 525.5L438.2 543.4L434.4 550.8L397.9 532.8ZM452.8 550.6L482.1 565.0L478.3 572.4L449.0 558.0ZM1014.2 826.6L1096.3 867.0L1092.7 874.6L1010.5 834.2ZM397.9 532.8L441.7 554.4L438.0 561.8L394.1 540.2ZM449.0 558.0L485.7 576.0L481.9 583.4L445.3 565.4ZM1010.5 834.2L1092.7 874.6L1089.1 882.1L1006.9 841.7ZM401.4 543.8L438.0 561.8L434.3 569.2L397.7 551.2ZM445.3 565.4L481.9 583.4L478.2 590.8L441.6 572.8ZM1006.9 841.7L1096.6 885.8L1093.0 893.4L1003.3 849.2ZM397.7 551.2L434.3 569.2L430.5 576.6L394.0 558.6ZM441.6 572.8L478.2 590.8L474.5 598.2L437.8 580.2ZM1010.8 852.9L1085.5 889.7L1081.9 897.3L1007.1 860.5ZM401.3 562.2L437.8 580.2L434.1 587.6L397.5 569.6ZM445.2 583.8L481.8 601.9L478.1 609.3L441.4 591.2ZM1022.1 867.8L1066.9 889.9L1063.3 897.5L1018.5 875.4ZM397.5 569.6L441.4 591.2L437.7 598.7L393.8 577.0ZM448.8 594.8L485.4 612.9L481.7 620.3L445.0 602.3ZM1033.4 882.7L1048.4 890.1L1044.7 897.7L1029.8 890.3ZM401.1 580.6L437.7 598.7L434.0 606.1L397.3 588.0ZM445.0 602.3L481.7 620.3L477.9 627.7L441.3 609.7ZM390.0 584.4L434.0 606.1L430.2 613.5L386.3 591.8ZM448.6 613.3L477.9 627.7L474.2 635.2L444.9 620.7ZM386.3 591.8L437.5 617.1L433.8 624.5L382.5 599.3ZM444.9 620.7L474.2 635.2L470.5 642.6L441.1 628.2ZM695.3 744.1L732.3 762.4L728.6 769.9L691.6 751.6ZM375.2 595.6L470.5 642.6L466.7 650.1L371.5 603.1ZM669.4 740.7L736.0 773.5L732.3 781.0L665.7 748.2ZM364.1 599.5L393.4 613.9L389.7 621.3L360.4 606.9ZM422.7 628.4L466.7 650.1L463.0 657.5L419.0 635.8ZM650.9 740.9L739.7 784.7L736.0 792.2L647.2 748.4ZM360.4 606.9L411.6 632.2L407.9 639.6L356.6 614.3ZM419.0 635.8L470.3 661.1L466.6 668.6L415.2 643.2ZM617.6 733.8L736.0 792.2L732.3 799.7L613.9 741.3ZM356.6 614.3L385.9 628.8L382.1 636.2L352.9 621.7ZM400.6 636.0L415.2 643.2L411.5 650.7L396.8 643.4ZM429.9 650.5L474.0 672.2L470.2 679.7L426.1 657.9ZM606.5 737.7L732.3 799.7L728.6 807.3L602.8 745.2ZM360.2 625.3L382.1 636.2L378.4 643.6L356.4 632.8ZM411.5 650.7L477.6 683.3L473.8 690.8L407.7 658.1ZM588.1 737.9L684.2 785.3L680.5 792.8L584.3 745.4ZM706.4 796.3L728.6 807.3L725.0 814.8L702.7 803.8ZM356.4 632.8L371.1 640.0L367.3 647.5L352.6 640.2ZM378.4 643.6L407.7 658.1L404.0 665.6L374.6 651.1ZM422.4 665.4L473.8 690.8L470.1 698.2L418.6 672.8ZM584.3 745.4L658.3 781.9L654.6 789.4L580.6 752.9ZM680.5 792.8L725.0 814.8L721.3 822.3L676.8 800.4ZM360.0 643.8L404.0 665.6L400.2 673.0L356.2 651.3ZM440.7 683.7L477.4 701.9L473.7 709.3L436.9 691.2ZM580.6 752.9L632.4 778.4L628.6 785.9L576.9 760.4ZM654.6 789.4L721.3 822.3L717.6 829.9L650.9 796.9ZM356.2 651.3L429.6 687.5L425.8 695.0L352.4 658.7ZM436.9 691.2L473.7 709.3L470.0 716.8L433.2 698.6ZM576.9 760.4L599.1 771.3L595.3 778.8L573.2 767.9ZM628.6 785.9L710.1 826.2L706.4 833.7L624.9 793.4ZM359.8 662.3L425.8 695.0L422.1 702.5L356.0 669.8ZM440.5 702.3L477.3 720.5L473.6 727.9L436.8 709.7ZM573.2 767.9L699.0 830.1L695.3 837.6L569.5 775.4ZM356.0 669.8L429.4 706.1L425.7 713.6L352.2 677.3ZM436.8 709.7L473.6 727.9L469.8 735.4L433.0 717.2ZM569.5 775.4L673.1 826.6L669.4 834.2L565.7 782.9ZM381.6 691.8L425.7 713.6L421.9 721.1L377.8 699.2ZM433.0 717.2L477.2 739.1L473.4 746.6L429.3 724.7ZM565.7 782.9L661.9 830.5L658.2 838.0L562.0 790.4ZM751.1 874.6L788.3 893.0L784.6 900.5L747.4 882.1ZM392.5 706.5L421.9 721.1L418.1 728.6L388.7 714.0ZM436.6 728.4L473.4 746.6L469.7 754.1L432.9 735.8ZM569.4 794.1L628.6 823.4L624.9 830.9L565.7 801.6ZM732.5 874.8L762.2 889.5L758.6 897.1L728.8 882.3ZM388.7 714.0L432.9 735.8L429.1 743.3L385.0 721.5ZM440.2 739.5L477.1 757.7L473.3 765.2L436.5 747.0ZM721.4 878.7L743.7 889.7L740.0 897.3L717.7 886.2ZM392.3 725.1L429.1 743.3L425.3 750.8L388.5 732.6ZM436.5 747.0L473.3 765.2L469.6 772.7L432.7 754.5ZM717.7 886.2L725.1 889.9L721.4 897.5L714.0 893.8ZM395.9 736.2L425.3 750.8L421.6 758.3L392.1 743.7ZM432.7 754.5L476.9 776.4L473.2 783.9L428.9 762.0ZM392.1 743.7L421.6 758.3L417.8 765.8L388.4 751.2ZM443.7 769.3L473.2 783.9L469.4 791.4L439.9 776.8ZM388.4 751.2L432.5 773.1L428.8 780.6L384.6 758.7ZM439.9 776.8L469.4 791.4L465.7 798.9L436.2 784.3ZM392.0 762.4L428.8 780.6L425.0 788.2L388.2 769.9ZM436.2 784.3L473.0 802.6L469.3 810.1L432.4 791.8ZM388.2 769.9L425.0 788.2L421.2 795.7L384.4 777.4ZM432.4 791.8L469.3 810.1L465.5 817.6L428.6 799.3ZM384.4 777.4L428.6 799.3L424.9 806.9L380.6 784.9ZM443.4 806.7L465.5 817.6L461.8 825.2L439.6 814.2ZM388.0 788.6L432.2 810.5L428.5 818.1L384.2 796.1ZM439.6 814.2L469.2 828.9L465.4 836.4L435.8 821.7ZM391.6 799.7L428.5 818.1L424.7 825.6L387.8 807.3ZM435.8 821.7L472.8 840.1L469.0 847.6L432.1 829.3ZM387.8 807.3L424.7 825.6L420.9 833.1L384.0 814.8ZM432.1 829.3L476.4 851.3L472.7 858.8L428.3 836.8ZM391.4 818.5L428.3 836.8L424.5 844.3L387.6 826.0ZM435.7 840.5L472.7 858.8L468.9 866.4L431.9 848.0ZM387.6 826.0L424.5 844.3L420.8 851.9L383.8 833.5ZM439.3 851.7L468.9 866.4L465.1 874.0L435.5 859.2ZM383.8 833.5L428.1 855.6L424.4 863.1L380.0 841.1ZM435.5 859.2L472.5 877.6L468.8 885.2L431.8 866.8ZM387.4 844.8L424.4 863.1L420.6 870.7L383.6 852.3ZM439.2 870.5L468.8 885.2L465.0 892.8L435.4 878.0ZM391.0 856.0L428.0 874.4L424.2 881.9L387.2 863.5ZM442.8 881.7L465.0 892.8L461.2 900.3L439.0 889.3ZM387.2 863.5L446.4 893.0L442.6 900.5L383.5 871.1ZM383.5 871.1L420.4 889.5L416.6 897.1L379.7 878.7ZM379.7 878.7L401.8 889.7L398.1 897.3L375.9 886.2Z" fill="#0ec1c1" stroke="#0ec1c1" stroke-width="0.8" shape-rendering="crispEdges"/><path d="M1393.4 148.9L1400.7 152.4L1397.3 159.6L1389.9 156.1ZM1389.9 156.1L1397.3 159.6L1393.8 166.8L1386.5 163.3ZM1386.5 163.3L1401.2 170.3L1397.7 177.5L1383.1 170.5ZM1390.4 174.0L1434.5 195.0L1431.0 202.3L1387.0 181.2ZM1423.7 198.7L1438.4 205.8L1434.9 213.0L1420.2 206.0ZM1427.6 209.5L1434.9 213.0L1431.5 220.2L1424.2 216.7ZM1424.2 216.7L1431.5 220.2L1428.1 227.4L1420.7 223.9ZM1420.7 223.9L1457.5 241.5L1454.1 248.7L1417.3 231.1ZM997.7 57.0L1005.0 60.5L1001.5 67.7L994.2 64.2ZM994.2 64.2L1001.5 67.7L998.0 74.8L990.7 71.3ZM998.0 74.8L1005.2 78.3L1001.7 85.4L994.4 82.0ZM994.4 82.0L1009.0 88.9L1005.4 96.1L990.9 89.1ZM998.2 92.6L1005.4 96.1L1001.9 103.2L994.6 99.7ZM994.6 99.7L1009.2 106.7L1005.6 113.9L991.1 106.9ZM991.1 106.9L1005.6 113.9L1002.1 121.0L987.6 114.1ZM994.8 117.6L1002.1 121.0L998.6 128.2L991.3 124.7ZM991.3 124.7L1013.1 135.2L1009.6 142.4L987.8 131.9ZM1123.1 223.5L1130.4 227.0L1126.9 234.3L1119.6 230.8ZM1097.6 220.2L1112.3 227.2L1108.7 234.5L1094.1 227.4ZM1119.6 230.8L1126.9 234.3L1123.4 241.5L1116.1 238.0ZM1222.2 280.1L1244.2 290.6L1240.7 297.9L1218.7 287.3ZM824.8 98.0L839.3 105.0L835.7 112.1L821.2 105.2ZM1101.4 231.0L1108.7 234.5L1105.2 241.7L1097.9 238.2ZM1116.1 238.0L1130.7 245.0L1127.2 252.3L1112.5 245.2ZM1189.3 273.2L1196.7 276.7L1193.2 284.0L1185.8 280.5ZM1204.0 280.3L1226.0 290.8L1222.5 298.1L1200.5 287.5ZM1097.9 238.2L1105.2 241.7L1101.7 248.9L1094.4 245.4ZM1119.9 248.7L1127.2 252.3L1123.7 259.5L1116.3 256.0ZM1178.5 276.9L1207.9 291.0L1204.4 298.3L1175.0 284.2ZM824.9 115.8L832.1 119.3L828.6 126.5L821.3 123.0ZM1094.4 245.4L1101.7 248.9L1098.2 256.2L1090.9 252.7ZM1123.7 259.5L1131.0 263.0L1127.5 270.3L1120.2 266.7ZM1145.7 270.1L1182.3 287.7L1178.8 295.0L1142.1 277.3ZM828.6 126.5L835.8 130.0L832.2 137.1L825.0 133.7ZM1090.9 252.7L1105.5 259.7L1102.0 266.9L1087.3 259.9ZM1120.2 266.7L1149.5 280.8L1146.0 288.1L1116.6 274.0ZM825.0 133.7L832.2 137.1L828.7 144.3L821.4 140.8ZM799.7 130.4L828.7 144.3L825.1 151.5L796.1 137.5ZM788.8 134.0L817.8 148.0L814.3 155.2L785.2 141.2ZM770.7 134.2L785.2 141.2L781.6 148.4L767.1 141.4ZM1037.1 307.3L1051.7 314.4L1048.2 321.7L1033.5 314.6ZM774.6 198.6L781.9 202.1L778.3 209.3L771.0 205.8ZM771.0 205.8L778.3 209.3L774.7 216.5L767.4 213.0ZM942.5 315.6L957.1 322.7L953.6 330.0L938.9 322.9ZM1001.1 343.9L1015.8 351.0L1012.2 358.3L997.5 351.2ZM938.9 322.9L953.6 330.0L950.0 337.2L935.4 330.1ZM997.5 351.2L1012.2 358.3L1008.6 365.6L994.0 358.5ZM1144.6 422.3L1159.3 429.4L1155.8 436.8L1141.0 429.6ZM942.7 333.7L1008.6 365.6L1005.1 372.9L939.1 341.0ZM1148.4 433.2L1155.8 436.8L1152.3 444.1L1144.9 440.5ZM1163.2 440.3L1170.5 443.9L1167.0 451.2L1159.6 447.7ZM1144.9 440.5L1167.0 451.2L1163.5 458.6L1141.3 447.9ZM1098.2 499.5L1105.6 503.1L1102.0 510.5L1094.7 506.9ZM1094.7 506.9L1102.0 510.5L1098.5 517.9L1091.1 514.3ZM1109.4 514.1L1124.2 521.3L1120.7 528.6L1105.9 521.5ZM1242.8 578.8L1265.0 589.6L1261.5 597.0L1239.2 586.2ZM1054.2 496.4L1061.6 499.9L1058.0 507.3L1050.6 503.7ZM1091.1 514.3L1113.3 525.0L1109.7 532.4L1087.5 521.7ZM1254.1 593.4L1261.5 597.0L1258.0 604.4L1250.6 600.8ZM1050.6 503.7L1080.2 518.1L1076.6 525.4L1047.1 511.1ZM1250.6 600.8L1258.0 604.4L1254.5 611.9L1247.0 608.3ZM1054.4 514.7L1069.2 521.9L1065.6 529.2L1050.9 522.1ZM1165.4 568.6L1172.8 572.2L1169.3 579.6L1161.8 576.0ZM1276.8 622.7L1284.2 626.3L1280.7 633.8L1273.3 630.1ZM1050.9 522.1L1065.6 529.2L1062.1 536.6L1047.3 529.4ZM1161.8 576.0L1169.3 579.6L1165.7 587.0L1158.3 583.4ZM1265.8 626.5L1280.7 633.8L1277.2 641.2L1262.3 634.0ZM1091.6 551.0L1099.0 554.6L1095.5 562.0L1088.1 558.4ZM1106.4 558.2L1121.3 565.4L1117.7 572.8L1102.9 565.6ZM1150.9 579.8L1165.7 587.0L1162.2 594.4L1147.3 587.2ZM1262.3 634.0L1269.7 637.6L1266.2 645.0L1258.8 641.4ZM1051.1 540.4L1058.5 544.0L1054.9 551.4L1047.5 547.8ZM1088.1 558.4L1117.7 572.8L1114.1 580.2L1084.5 565.8ZM1199.3 612.5L1214.1 619.7L1210.6 627.1L1195.7 619.9ZM1236.4 630.5L1243.9 634.2L1240.3 641.6L1232.9 638.0ZM1047.5 547.8L1062.3 555.0L1058.8 562.4L1044.0 555.2ZM1158.6 601.8L1166.0 605.5L1162.5 612.9L1155.1 609.3ZM1232.9 638.0L1240.3 641.6L1236.8 649.0L1229.4 645.4ZM1051.4 558.8L1073.6 569.6L1070.0 577.0L1047.8 566.2ZM1155.1 609.3L1162.5 612.9L1158.9 620.3L1151.5 616.7ZM1229.4 645.4L1236.8 649.0L1233.3 656.5L1225.8 652.9ZM1326.2 692.6L1333.7 696.2L1330.2 703.7L1322.7 700.0ZM1070.0 577.0L1092.2 587.8L1088.6 595.2L1066.4 584.4ZM1151.5 616.7L1158.9 620.3L1155.4 627.7L1148.0 624.1ZM1322.7 700.0L1330.2 703.7L1326.7 711.2L1319.2 707.5ZM1319.2 707.5L1334.1 714.8L1330.6 722.3L1315.7 715.0ZM1323.1 718.6L1330.6 722.3L1327.1 729.8L1319.6 726.1ZM1319.6 726.1L1327.1 729.8L1323.6 737.2L1316.1 733.6ZM804.9 484.4L812.3 488.0L808.7 495.4L801.3 491.8ZM801.3 491.8L808.7 495.4L805.0 502.7L797.7 499.2ZM797.7 499.2L812.4 506.3L808.7 513.7L794.0 506.5ZM801.4 510.1L808.7 513.7L805.1 521.1L797.8 517.5ZM797.8 517.5L812.5 524.7L808.8 532.0L794.1 524.9ZM1294.5 759.9L1316.9 770.9L1313.4 778.4L1291.0 767.4ZM801.5 528.4L808.8 532.0L805.2 539.4L797.8 535.8ZM1276.0 760.1L1305.9 774.8L1302.4 782.3L1272.5 767.6ZM797.8 535.8L805.2 539.4L801.6 546.8L794.2 543.2ZM1168.0 716.6L1175.4 720.3L1171.9 727.7L1164.4 724.1ZM1272.5 767.6L1279.9 771.3L1276.4 778.8L1268.9 775.2ZM786.8 539.6L794.2 543.2L790.6 550.6L783.2 547.0ZM1164.4 724.1L1171.9 727.7L1168.3 735.2L1160.8 731.6ZM1268.9 775.2L1276.4 778.8L1272.9 786.3L1265.4 782.7ZM783.2 547.0L790.6 550.6L786.9 558.0L779.6 554.4ZM1160.8 731.6L1168.3 735.2L1164.7 742.7L1157.3 739.1ZM1265.4 782.7L1280.3 790.0L1276.8 797.5L1261.8 790.2ZM779.6 554.4L786.9 558.0L783.3 565.4L775.9 561.8ZM1269.3 793.8L1284.3 801.2L1280.7 808.7L1265.8 801.4ZM768.6 558.2L775.9 561.8L772.3 569.2L764.9 565.6ZM1273.3 805.0L1280.7 808.7L1277.2 816.2L1269.7 812.6ZM750.2 558.4L764.9 565.6L761.3 573.0L746.5 565.8ZM1262.2 808.9L1277.2 816.2L1273.6 823.8L1258.7 816.4ZM724.5 555.0L746.5 565.8L742.9 573.2L720.8 562.4ZM1266.2 820.1L1281.1 827.4L1277.6 835.0L1262.6 827.6ZM706.1 555.2L728.2 566.0L724.5 573.4L702.5 562.6ZM1225.2 809.3L1240.1 816.6L1236.6 824.2L1221.6 816.8ZM1270.1 831.3L1277.6 835.0L1274.0 842.5L1266.5 838.8ZM453.6 440.8L460.9 444.3L457.2 451.7L449.9 448.1ZM687.8 555.4L702.5 562.6L698.8 570.0L684.1 562.8ZM1199.2 805.8L1229.1 820.5L1225.5 828.0L1195.6 813.4ZM449.9 448.1L457.2 451.7L453.5 459.0L446.2 455.4ZM1180.6 806.0L1195.6 813.4L1192.0 820.9L1177.1 813.6ZM1203.1 817.0L1210.6 820.7L1207.0 828.2L1199.5 824.6ZM446.2 455.4L453.5 459.0L449.8 466.4L442.5 462.8ZM614.3 537.8L636.4 548.6L632.7 556.0L610.7 545.2ZM1162.1 806.3L1184.5 817.2L1181.0 824.8L1158.5 813.8ZM618.0 548.8L625.3 552.4L621.6 559.8L614.3 556.2ZM1143.6 806.5L1158.5 813.8L1155.0 821.3L1140.0 814.0ZM614.3 556.2L621.6 559.8L618.0 567.2L610.6 563.6ZM1117.6 803.0L1147.5 817.6L1143.9 825.2L1114.0 810.5ZM1099.1 803.2L1136.4 821.5L1132.8 829.1L1095.5 810.7ZM1080.6 803.4L1117.9 821.7L1114.3 829.3L1077.0 810.9ZM434.9 495.8L449.5 502.9L445.8 510.3L431.2 503.1ZM1069.5 807.3L1099.4 821.9L1095.8 829.5L1065.9 814.8ZM438.5 506.7L460.4 517.5L456.6 524.9L434.7 514.1ZM1065.9 814.8L1073.4 818.5L1069.8 826.0L1062.3 822.3ZM442.0 517.7L449.3 521.3L445.6 528.7L438.3 525.1ZM1062.3 822.3L1069.8 826.0L1066.2 833.5L1058.7 829.9ZM438.3 525.1L445.6 528.7L441.9 536.0L434.6 532.4ZM1043.8 822.5L1051.2 826.2L1047.6 833.7L1040.2 830.1ZM1066.2 833.5L1073.6 837.2L1070.0 844.8L1062.6 841.1ZM434.6 532.4L441.9 536.0L438.2 543.4L430.8 539.8ZM1047.6 833.7L1062.6 841.1L1059.0 848.6L1044.0 841.3ZM1070.0 844.8L1077.5 848.4L1073.9 856.0L1066.4 852.3ZM438.2 543.4L452.8 550.6L449.0 558.0L434.4 550.8ZM441.7 554.4L449.0 558.0L445.3 565.4L438.0 561.8ZM438.0 561.8L445.3 565.4L441.6 572.8L434.3 569.2ZM434.3 569.2L441.6 572.8L437.8 580.2L430.5 576.6ZM437.8 580.2L445.2 583.8L441.4 591.2L434.1 587.6ZM441.4 591.2L448.8 594.8L445.0 602.3L437.7 598.7ZM437.7 598.7L445.0 602.3L441.3 609.7L434.0 606.1ZM434.0 606.1L448.6 613.3L444.9 620.7L430.2 613.5ZM437.5 617.1L444.9 620.7L441.1 628.2L433.8 624.5ZM393.4 613.9L422.7 628.4L419.0 635.8L389.7 621.3ZM411.6 632.2L419.0 635.8L415.2 643.2L407.9 639.6ZM385.9 628.8L400.6 636.0L396.8 643.4L382.1 636.2ZM415.2 643.2L429.9 650.5L426.1 657.9L411.5 650.7ZM382.1 636.2L411.5 650.7L407.7 658.1L378.4 643.6ZM684.2 785.3L706.4 796.3L702.7 803.8L680.5 792.8ZM371.1 640.0L378.4 643.6L374.6 651.1L367.3 647.5ZM407.7 658.1L422.4 665.4L418.6 672.8L404.0 665.6ZM658.3 781.9L680.5 792.8L676.8 800.4L654.6 789.4ZM404.0 665.6L440.7 683.7L436.9 691.2L400.2 673.0ZM632.4 778.4L654.6 789.4L650.9 796.9L628.6 785.9ZM429.6 687.5L436.9 691.2L433.2 698.6L425.8 695.0ZM599.1 771.3L628.6 785.9L624.9 793.4L595.3 778.8ZM425.8 695.0L440.5 702.3L436.8 709.7L422.1 702.5ZM429.4 706.1L436.8 709.7L433.0 717.2L425.7 713.6ZM425.7 713.6L433.0 717.2L429.3 724.7L421.9 721.1ZM421.9 721.1L436.6 728.4L432.9 735.8L418.1 728.6ZM432.9 735.8L440.2 739.5L436.5 747.0L429.1 743.3ZM429.1 743.3L436.5 747.0L432.7 754.5L425.3 750.8ZM425.3 750.8L432.7 754.5L428.9 762.0L421.6 758.3ZM421.6 758.3L443.7 769.3L439.9 776.8L417.8 765.8ZM432.5 773.1L439.9 776.8L436.2 784.3L428.8 780.6ZM428.8 780.6L436.2 784.3L432.4 791.8L425.0 788.2ZM425.0 788.2L432.4 791.8L428.6 799.3L421.2 795.7ZM428.6 799.3L443.4 806.7L439.6 814.2L424.9 806.9ZM432.2 810.5L439.6 814.2L435.8 821.7L428.5 818.1ZM428.5 818.1L435.8 821.7L432.1 829.3L424.7 825.6ZM424.7 825.6L432.1 829.3L428.3 836.8L420.9 833.1ZM428.3 836.8L435.7 840.5L431.9 848.0L424.5 844.3ZM424.5 844.3L439.3 851.7L435.5 859.2L420.8 851.9ZM428.1 855.6L435.5 859.2L431.8 866.8L424.4 863.1ZM424.4 863.1L439.2 870.5L435.4 878.0L420.6 870.7ZM428.0 874.4L442.8 881.7L439.0 889.3L424.2 881.9Z" fill="#c10ec1" stroke="#c10ec1" stroke-width="0.8" shape-rendering="crispEdges"/><g fill="none" stroke="#c81ee8" stroke-width="2"><polyline points="1408.7,132.0 1407.6,164.3 1414.1,167.6 1442.2,167.6 1446.5,175.1 1444.3,220.5 1457.3,222.6 1463.7,228.0"/><polyline points="1129.2,256.5 1135.7,263.0 1170.2,265.1 1172.4,270.5 1200.4,271.6 1232.8,271.6 1239.3,278.0"/><polyline points="938.2,308.0 948.4,314.3 950.9,332.0 968.6,337.1 986.3,352.3 1004.1,344.7"/><polyline points="423.4,499.7 419.1,527.8 417.0,592.5 414.8,622.7 408.3,680.3 408.3,740.8 406.2,837.9"/><polyline points="401.9,848.7 404.0,889.0"/><polyline points="421.3,433.5 426.7,433.5 422.4,461.5"/><polyline points="762.0,576.0 800.0,566.0 805.0,540.0"/><polyline points="1068.6,820.0 1159.9,822.0"/><polyline points="762.3,123.3 818.4,122.3"/><polyline points="1280.0,782.0 1278.0,833.0"/><polyline points="1293.0,780.0 1316.0,778.0"/></g><polyline points="859.3,248.5 865.9,278.0 871.3,308.3 878.8,327.7 889.6,362.2 900.4,388.1 905.8,414.0 904.7,463.0 902.6,484.6 891.8,512.6 878.8,549.3 861.6,583.9 840.0,622.7" fill="none" stroke="#3ee21a" stroke-width="1.6"/><g stroke="#a0a0a2" stroke-opacity="0.55" stroke-width="1.1"><line x1="340" y1="-136.3" x2="1580" y2="115.7"/><line x1="340" y1="28.5" x2="1580" y2="284.8"/><line x1="340" y1="196.8" x2="1580" y2="454.9"/><line x1="340" y1="368.0" x2="1580" y2="627.0"/><line x1="340" y1="539.7" x2="1580" y2="802.2"/><line x1="340" y1="716.0" x2="1580" y2="978.8"/><line x1="452.1" y1="20" x2="248.3" y2="900"/><line x1="622.2" y1="20" x2="423.3" y2="900"/><line x1="791.5" y1="20" x2="598.6" y2="900"/><line x1="961.2" y1="20" x2="775.0" y2="900"/><line x1="1131.6" y1="20" x2="949.3" y2="900"/><line x1="1300.5" y1="20" x2="1124.0" y2="900"/><line x1="1471.7" y1="20" x2="1297.9" y2="900"/><line x1="1640.4" y1="20" x2="1473.4" y2="900"/></g><g><polygon points="801.8,610.3 810.4,611.8 803.3,665 792.2,662.9" fill="#1c1c1c"/><polygon points="802.8,599.6 814.4,601.6 812.9,613.3 800.8,611.3" fill="#3c3c3c"/><polygon points="791.1,652.8 803.3,654.8 801.8,668 789.6,666" fill="#383838"/><polygon points="858,622.4 867.1,623.4 860,677.1 849.9,676.1" fill="#1c1c1c"/><polygon points="860,612.3 873.2,613.8 871.7,625.5 858.5,623.9" fill="#3c3c3c"/><polygon points="848.9,665 863.1,666.5 861.5,681.2 847.4,679.6" fill="#383838"/><polygon points="845.8,633.6 853,635 852,647 844.8,646" fill="#151515"/><path d="M818.5,620.4 L845.8,624.4 Q850,626 849.9,630 L850.9,650.8 L842.8,652.8 L840.8,672.1 Q840,675.5 836,674.5 L811.4,670 Q807,669 807.3,665 L809.4,643.7 L805.3,642.7 L808,628 Q810,620 818.5,620.4 Z" fill="#d6d6d6"/><polygon points="823.6,626.5 837.7,628.5 836.2,639.1 822.5,637.1" fill="#262626"/><polygon points="826,629 835,630.3 834,636.5 825,635.2" fill="#111"/><path d="M824,646 L823,668 M830,647 L829,669" stroke="#b8b8b8" stroke-width="0.8"/><rect x="817.5" y="609.2" width="4" height="5" fill="#f4f4f4"/><rect x="852" y="616.3" width="4" height="5" fill="#f4f4f4"/><rect x="840.8" y="667" width="4" height="5" fill="#eee"/><g fill="#333"><circle cx="817" cy="634" r="0.8"/><circle cx="843" cy="643" r="0.9"/><circle cx="818" cy="643" r="0.8"/><circle cx="812" cy="662" r="0.7"/><circle cx="838" cy="662" r="0.7"/><circle cx="828" cy="672" r="0.7"/></g></g></g></svg><!--/vp-->
</body>
</body>
</body>
</body>
</body>
</body>
</body>
</body>
</body>
</body>
</body>
</body>
</body>
</body>
</body>
</body></html>
